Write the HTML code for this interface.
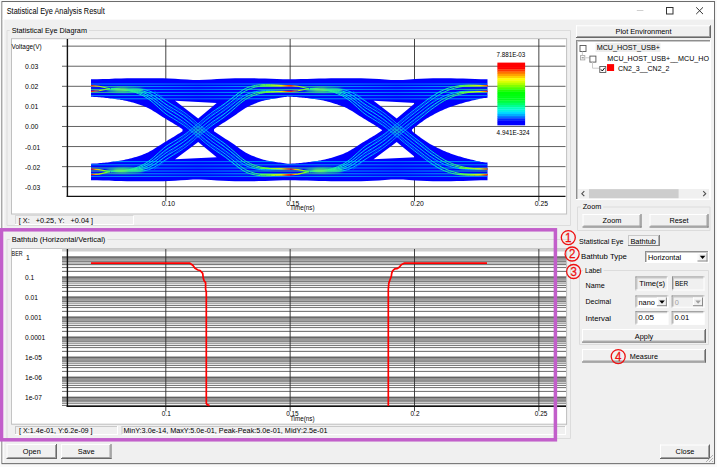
<!DOCTYPE html>
<html><head><meta charset="utf-8"><title>Statistical Eye Analysis Result</title>
<style>html,body{margin:0;padding:0;background:#fff;overflow:hidden}svg{display:block}</style></head>
<body>
<svg width="717" height="467" viewBox="0 0 717 467" font-family='"Liberation Sans", sans-serif' font-size="8" shape-rendering="auto">
<rect x="0" y="0" width="717" height="467" fill="#ffffff"/>
<rect x="0" y="0" width="717" height="467" fill="#fafafa"/>
<rect x="1.95" y="1.55" width="712.6" height="462.1" fill="#f0f0f0" stroke="#666666" stroke-width="1"/>
<rect x="2.5" y="2.1" width="711.5" height="17.5" fill="#ffffff"/>
<rect x="2.5" y="19" width="1.8" height="444" fill="#fbfbfb"/>
<text x="6.7" y="13.8" font-size="8.3" fill="#000" textLength="98" lengthAdjust="spacingAndGlyphs">Statistical Eye Analysis Result</text>
<line x1="636.8" y1="10.5" x2="643.4" y2="10.5" stroke="#cfcfcf" stroke-width="1"/>
<rect x="666.5" y="7.5" width="6.5" height="6.5" fill="none" stroke="#333" stroke-width="1"/>
<path d="M696.2 7.3L703 14.1M703 7.3L696.2 14.1" stroke="#333" stroke-width="1" fill="none"/>
<path d="M9.7 30.5H7.0V225.5H570.5V30.5H89.0" fill="none" stroke="#dcdcdc"/>
<text x="11.7" y="32.7" font-size="8" fill="#000" textLength="75.3" lengthAdjust="spacingAndGlyphs">Statistical Eye Diagram</text>
<rect x="11.5" y="38.7" width="555.1" height="175.3" fill="#fff" stroke="#c0c0c0" stroke-width="1"/>
<rect x="15" y="215.5" width="119" height="9" fill="#f0f0f0"/>
<line x1="15" y1="215.5" x2="134" y2="215.5" stroke="#d8d8d8" stroke-width="1"/>
<line x1="15.5" y1="215.5" x2="15.5" y2="224.5" stroke="#d8d8d8" stroke-width="1"/>
<line x1="15" y1="224.5" x2="134" y2="224.5" stroke="#ffffff" stroke-width="1"/>
<line x1="133.5" y1="215.5" x2="133.5" y2="224.5" stroke="#ffffff" stroke-width="1"/>
<text x="18.8" y="222.8" font-size="8" fill="#000" textLength="74.2" lengthAdjust="spacingAndGlyphs" xml:space="preserve">[ X:&#160;&#160; +0.25, Y:&#160;&#160; +0.04 ]</text>
<line x1="62" y1="46.15" x2="565.5" y2="46.15" stroke="#505050" stroke-width="0.9"/>
<text x="11.6" y="48.5" font-size="7" fill="#000" textLength="30" lengthAdjust="spacingAndGlyphs">Voltage(V)</text>
<line x1="62" y1="66.22999999999999" x2="565.5" y2="66.22999999999999" stroke="#505050" stroke-width="0.9"/>
<text x="25.1" y="68.6" font-size="7" fill="#000" textLength="13.3" lengthAdjust="spacingAndGlyphs">0.03</text>
<line x1="62" y1="86.31" x2="565.5" y2="86.31" stroke="#505050" stroke-width="0.9"/>
<text x="25.1" y="88.6" font-size="7" fill="#000" textLength="13.3" lengthAdjust="spacingAndGlyphs">0.02</text>
<line x1="62" y1="106.38999999999999" x2="565.5" y2="106.38999999999999" stroke="#505050" stroke-width="0.9"/>
<text x="25.1" y="108.6" font-size="7" fill="#000" textLength="13.3" lengthAdjust="spacingAndGlyphs">0.01</text>
<line x1="62" y1="126.47" x2="565.5" y2="126.47" stroke="#505050" stroke-width="0.9"/>
<text x="25.1" y="128.6" font-size="7" fill="#000" textLength="13.3" lengthAdjust="spacingAndGlyphs">0.00</text>
<line x1="62" y1="146.54999999999998" x2="565.5" y2="146.54999999999998" stroke="#505050" stroke-width="0.9"/>
<text x="25.1" y="149.6" font-size="7" fill="#000" textLength="15.1" lengthAdjust="spacingAndGlyphs">-0.01</text>
<line x1="62" y1="166.63" x2="565.5" y2="166.63" stroke="#505050" stroke-width="0.9"/>
<text x="25.1" y="169.6" font-size="7" fill="#000" textLength="15.1" lengthAdjust="spacingAndGlyphs">-0.02</text>
<line x1="62" y1="186.71" x2="565.5" y2="186.71" stroke="#505050" stroke-width="0.9"/>
<text x="25.1" y="189.6" font-size="7" fill="#000" textLength="15.1" lengthAdjust="spacingAndGlyphs">-0.03</text>
<line x1="165.8" y1="39" x2="165.8" y2="201.3" stroke="#303030" stroke-width="0.9"/>
<text x="161.8" y="206" font-size="7" fill="#000" textLength="13.2" lengthAdjust="spacingAndGlyphs">0.10</text>
<line x1="290.15" y1="39" x2="290.15" y2="201.3" stroke="#303030" stroke-width="0.9"/>
<text x="286.15" y="206" font-size="7" fill="#000" textLength="13.2" lengthAdjust="spacingAndGlyphs">0.15</text>
<line x1="414.5" y1="39" x2="414.5" y2="201.3" stroke="#303030" stroke-width="0.9"/>
<text x="410.5" y="206" font-size="7" fill="#000" textLength="13.2" lengthAdjust="spacingAndGlyphs">0.20</text>
<line x1="538.85" y1="39" x2="538.85" y2="201.3" stroke="#303030" stroke-width="0.9"/>
<text x="534.85" y="206" font-size="7" fill="#000" textLength="13.2" lengthAdjust="spacingAndGlyphs">0.25</text>
<text x="290" y="210" font-size="7" fill="#000" textLength="24.5" lengthAdjust="spacingAndGlyphs">Time(ns)</text>
<line x1="67.4" y1="39" x2="67.4" y2="197" stroke="#111" stroke-width="1.4"/>
<line x1="66.7" y1="196.4" x2="565.5" y2="196.4" stroke="#111" stroke-width="1.3"/>
<defs>
<clipPath id="eyeclip"><path clip-rule="evenodd" d="M91.0 79.3 97.0 79.2 103.0 79.1 109.0 78.9 115.0 78.6 121.0 78.5 127.0 78.3 133.0 78.3 139.0 78.2 145.0 78.2 151.0 78.2 157.0 78.3 163.0 78.3 169.0 78.5 175.0 78.8 181.0 79.2 187.0 79.6 193.0 79.9 199.0 80.0 205.0 79.8 211.0 79.5 217.0 79.1 223.0 78.7 229.0 78.5 235.0 78.3 241.0 78.3 247.0 78.3 253.0 78.3 259.0 78.4 265.0 78.6 271.0 78.8 277.0 79.0 283.0 79.2 289.0 79.3 295.0 79.3 301.0 79.1 307.0 78.9 313.0 78.7 319.0 78.5 325.0 78.4 331.0 78.3 337.0 78.2 343.0 78.2 349.0 78.2 355.0 78.3 361.0 78.3 367.0 78.5 373.0 78.8 379.0 79.1 385.0 79.6 391.0 79.9 397.0 80.0 403.0 79.9 409.0 79.5 415.0 79.1 421.0 78.7 427.0 78.5 433.0 78.3 439.0 78.3 445.0 78.3 451.0 78.3 457.0 78.4 463.0 78.6 469.0 78.8 475.0 79.0 481.0 79.2 487.0 79.3 487.5 79.3 487.5 180.2 487.0 180.2 481.0 180.3 475.0 180.5 469.0 180.7 463.0 180.9 457.0 181.1 451.0 181.2 445.0 181.2 439.0 181.2 433.0 181.2 427.0 181.0 421.0 180.8 415.0 180.4 409.0 180.0 403.0 179.6 397.0 179.5 391.0 179.6 385.0 179.9 379.0 180.4 373.0 180.7 367.0 181.0 361.0 181.2 355.0 181.2 349.0 181.3 343.0 181.3 337.0 181.3 331.0 181.2 325.0 181.1 319.0 181.0 313.0 180.8 307.0 180.6 301.0 180.4 295.0 180.2 289.0 180.2 283.0 180.3 277.0 180.5 271.0 180.7 265.0 180.9 259.0 181.1 253.0 181.2 247.0 181.2 241.0 181.2 235.0 181.2 229.0 181.0 223.0 180.8 217.0 180.4 211.0 180.0 205.0 179.7 199.0 179.5 193.0 179.6 187.0 179.9 181.0 180.3 175.0 180.7 169.0 181.0 163.0 181.2 157.0 181.2 151.0 181.3 145.0 181.3 139.0 181.3 133.0 181.2 127.0 181.2 121.0 181.0 115.0 180.9 109.0 180.6 103.0 180.4 97.0 180.3 91.0 180.2ZM91.0 96.7 92.5 96.8 94.0 96.9 95.5 96.9 97.0 97.0 98.5 97.2 100.0 97.3 101.5 97.4 103.0 97.6 104.5 97.7 106.0 97.9 107.5 98.0 109.0 98.2 110.5 98.4 112.0 98.6 113.5 98.8 115.0 99.0 116.5 99.2 118.0 99.4 119.5 99.6 121.0 99.9 122.5 100.1 124.0 100.4 125.5 100.8 127.0 101.1 128.5 101.4 130.0 101.8 131.5 102.2 133.0 102.6 134.5 103.1 136.0 103.5 137.5 104.0 139.0 104.5 140.5 105.0 142.0 105.5 143.5 106.1 145.0 106.7 146.5 107.3 148.0 108.0 149.5 108.8 151.0 109.6 152.5 110.5 154.0 111.4 155.5 112.3 157.0 113.3 158.5 114.3 160.0 115.2 161.5 116.2 163.0 117.2 164.5 118.1 166.0 119.0 167.5 119.9 169.0 120.8 170.5 121.7 172.0 122.6 173.5 123.5 175.0 124.4 176.5 125.3 178.0 126.3 179.5 127.2 181.0 128.2 182.5 129.2 182.5 131.2 181.0 132.2 179.5 133.2 178.0 134.1 176.5 135.1 175.0 136.0 173.5 136.9 172.0 137.8 170.5 138.7 169.0 139.6 167.5 140.5 166.0 141.4 164.5 142.3 163.0 143.2 161.5 144.2 160.0 145.2 158.5 146.1 157.0 147.1 155.5 148.1 154.0 149.0 152.5 149.9 151.0 150.8 149.5 151.6 148.0 152.4 146.5 153.1 145.0 153.7 143.5 154.3 142.0 154.9 140.5 155.4 139.0 155.9 137.5 156.4 136.0 156.9 134.5 157.3 133.0 157.8 131.5 158.2 130.0 158.6 128.5 159.0 127.0 159.3 125.5 159.6 124.0 160.0 122.5 160.3 121.0 160.5 119.5 160.8 118.0 161.0 116.5 161.2 115.0 161.4 113.5 161.6 112.0 161.8 110.5 162.0 109.0 162.2 107.5 162.4 106.0 162.5 104.5 162.7 103.0 162.8 101.5 163.0 100.0 163.1 98.5 163.2 97.0 163.4 95.5 163.5 94.0 163.5 92.5 163.6 91.0 163.7ZM214.0 129.2 215.5 128.1 217.0 127.1 218.5 126.1 220.0 125.1 221.5 124.1 223.0 123.1 224.5 122.2 226.0 121.2 227.5 120.3 229.0 119.3 230.5 118.3 232.0 117.3 233.5 116.3 235.0 115.3 236.5 114.2 238.0 113.1 239.5 112.0 241.0 111.0 242.5 109.9 244.0 108.9 245.5 108.0 247.0 107.2 248.5 106.4 250.0 105.7 251.5 105.0 253.0 104.4 254.5 103.8 256.0 103.2 257.5 102.6 259.0 102.1 260.5 101.6 262.0 101.1 263.5 100.7 265.0 100.3 266.5 100.0 268.0 99.7 269.5 99.4 271.0 99.1 272.5 98.9 274.0 98.7 275.5 98.4 277.0 98.2 278.5 98.0 280.0 97.8 281.5 97.6 283.0 97.3 284.5 97.1 286.0 96.9 287.5 96.6 289.0 96.7 290.5 96.7 292.0 96.8 293.5 96.9 295.0 97.0 296.5 97.1 298.0 97.2 299.5 97.4 301.0 97.5 302.5 97.7 304.0 97.8 305.5 98.0 307.0 98.1 308.5 98.3 310.0 98.5 311.5 98.7 313.0 98.9 314.5 99.1 316.0 99.3 317.5 99.5 319.0 99.8 320.5 100.0 322.0 100.3 323.5 100.6 325.0 101.0 326.5 101.3 328.0 101.7 329.5 102.1 331.0 102.5 332.5 102.9 334.0 103.4 335.5 103.9 337.0 104.3 338.5 104.9 340.0 105.4 341.5 105.9 343.0 106.5 344.5 107.1 346.0 107.8 347.5 108.5 349.0 109.4 350.5 110.2 352.0 111.1 353.5 112.0 355.0 113.0 356.5 113.9 358.0 114.9 359.5 115.9 361.0 116.8 362.5 117.8 364.0 118.7 365.5 119.6 367.0 120.5 368.5 121.4 370.0 122.3 371.5 123.2 373.0 124.1 374.5 125.0 376.0 125.9 377.5 126.9 379.0 127.9 380.5 128.9 382.0 129.9 382.0 130.5 380.5 131.5 379.0 132.5 377.5 133.5 376.0 134.5 374.5 135.4 373.0 136.3 371.5 137.2 370.0 138.1 368.5 139.0 367.0 139.9 365.5 140.8 364.0 141.7 362.5 142.6 361.0 143.6 359.5 144.5 358.0 145.5 356.5 146.5 355.0 147.4 353.5 148.4 352.0 149.3 350.5 150.2 349.0 151.0 347.5 151.9 346.0 152.6 344.5 153.3 343.0 153.9 341.5 154.5 340.0 155.0 338.5 155.5 337.0 156.1 335.5 156.5 334.0 157.0 332.5 157.5 331.0 157.9 329.5 158.3 328.0 158.7 326.5 159.1 325.0 159.4 323.5 159.8 322.0 160.1 320.5 160.4 319.0 160.6 317.5 160.9 316.0 161.1 314.5 161.3 313.0 161.5 311.5 161.7 310.0 161.9 308.5 162.1 307.0 162.3 305.5 162.4 304.0 162.6 302.5 162.7 301.0 162.9 299.5 163.0 298.0 163.2 296.5 163.3 295.0 163.4 293.5 163.5 292.0 163.6 290.5 163.7 289.0 163.7 287.5 163.8 286.0 163.5 284.5 163.3 283.0 163.1 281.5 162.8 280.0 162.6 278.5 162.4 277.0 162.2 275.5 162.0 274.0 161.7 272.5 161.5 271.0 161.3 269.5 161.0 268.0 160.7 266.5 160.4 265.0 160.1 263.5 159.7 262.0 159.3 260.5 158.8 259.0 158.3 257.5 157.8 256.0 157.2 254.5 156.6 253.0 156.0 251.5 155.4 250.0 154.7 248.5 154.0 247.0 153.2 245.5 152.4 244.0 151.5 242.5 150.5 241.0 149.4 239.5 148.4 238.0 147.3 236.5 146.2 235.0 145.1 233.5 144.1 232.0 143.1 230.5 142.1 229.0 141.1 227.5 140.1 226.0 139.2 224.5 138.2 223.0 137.3 221.5 136.3 220.0 135.3 218.5 134.3 217.0 133.3 215.5 132.3 214.0 131.2ZM412.0 129.4 413.5 128.2 415.0 127.0 416.5 125.9 418.0 124.7 419.5 123.6 421.0 122.5 422.5 121.4 424.0 120.3 425.5 119.3 427.0 118.3 428.5 117.4 430.0 116.5 431.5 115.7 433.0 114.9 434.5 114.1 436.0 113.3 437.5 112.5 439.0 111.8 440.5 111.1 442.0 110.4 443.5 109.7 445.0 109.1 446.5 108.4 448.0 107.8 449.5 107.3 451.0 106.7 452.5 106.2 454.0 105.7 455.5 105.2 457.0 104.7 458.5 104.2 460.0 103.8 461.5 103.4 463.0 102.9 464.5 102.5 466.0 102.1 467.5 101.7 469.0 101.4 470.5 101.0 472.0 100.6 473.5 100.3 475.0 99.9 476.5 99.5 478.0 99.2 479.5 98.8 481.0 98.5 482.5 98.3 484.0 98.1 485.5 97.9 487.5 97.8 487.5 162.6 485.5 162.5 484.0 162.3 482.5 162.1 481.0 161.9 479.5 161.6 478.0 161.2 476.5 160.9 475.0 160.5 473.5 160.1 472.0 159.8 470.5 159.4 469.0 159.0 467.5 158.7 466.0 158.3 464.5 157.9 463.0 157.5 461.5 157.0 460.0 156.6 458.5 156.2 457.0 155.7 455.5 155.2 454.0 154.7 452.5 154.2 451.0 153.7 449.5 153.1 448.0 152.6 446.5 152.0 445.0 151.3 443.5 150.7 442.0 150.0 440.5 149.3 439.0 148.6 437.5 147.9 436.0 147.1 434.5 146.3 433.0 145.5 431.5 144.7 430.0 143.9 428.5 143.0 427.0 142.1 425.5 141.1 424.0 140.1 422.5 139.0 421.0 137.9 419.5 136.8 418.0 135.7 416.5 134.5 415.0 133.4 413.5 132.2 412.0 131.0ZM175.1 100.8L216.7 103.0L198.2 118.6ZM175.1 159.3L216.7 157.3L198.2 142.0ZM373.6 100.8L415.2 103.0L396.7 118.6ZM373.6 159.3L415.2 157.3L396.7 142.0Z"/></clipPath>
<linearGradient id="heat" gradientUnits="userSpaceOnUse" x1="0" y1="0" x2="600" y2="0">
<stop offset="0.0267" stop-color="#00c0ff" stop-opacity="1"/>
<stop offset="0.0600" stop-color="#00e8e0" stop-opacity="1"/>
<stop offset="0.0883" stop-color="#20f890" stop-opacity="1"/>
<stop offset="0.1150" stop-color="#70ff30" stop-opacity="1"/>
<stop offset="0.1367" stop-color="#e8f000" stop-opacity="1"/>
<stop offset="0.1483" stop-color="#ff4000" stop-opacity="1"/>
<stop offset="0.1533" stop-color="#ff2000" stop-opacity="1"/>
<stop offset="0.1600" stop-color="#ffb000" stop-opacity="1"/>
<stop offset="0.1683" stop-color="#b0ff00" stop-opacity="1"/>
<stop offset="0.1850" stop-color="#40ff50" stop-opacity="1"/>
<stop offset="0.2150" stop-color="#20f8a0" stop-opacity="1"/>
<stop offset="0.2483" stop-color="#00e8e8" stop-opacity="1"/>
<stop offset="0.2850" stop-color="#00c0ff" stop-opacity="1"/>
<stop offset="0.3283" stop-color="#00a0ff" stop-opacity="1"/>
<stop offset="0.3300" stop-color="#00a0ff" stop-opacity="1"/>
<stop offset="0.3583" stop-color="#00c0ff" stop-opacity="1"/>
<stop offset="0.3917" stop-color="#00e8e0" stop-opacity="1"/>
<stop offset="0.4200" stop-color="#20f890" stop-opacity="1"/>
<stop offset="0.4467" stop-color="#70ff30" stop-opacity="1"/>
<stop offset="0.4683" stop-color="#e8f000" stop-opacity="1"/>
<stop offset="0.4800" stop-color="#ff4000" stop-opacity="1"/>
<stop offset="0.4850" stop-color="#ff2000" stop-opacity="1"/>
<stop offset="0.4917" stop-color="#ffb000" stop-opacity="1"/>
<stop offset="0.5000" stop-color="#b0ff00" stop-opacity="1"/>
<stop offset="0.5167" stop-color="#40ff50" stop-opacity="1"/>
<stop offset="0.5467" stop-color="#20f8a0" stop-opacity="1"/>
<stop offset="0.5800" stop-color="#00e8e8" stop-opacity="1"/>
<stop offset="0.6167" stop-color="#00c0ff" stop-opacity="1"/>
<stop offset="0.6600" stop-color="#00a0ff" stop-opacity="1"/>
<stop offset="0.6617" stop-color="#00a0ff" stop-opacity="1"/>
<stop offset="0.6900" stop-color="#00c0ff" stop-opacity="1"/>
<stop offset="0.7233" stop-color="#00e8e0" stop-opacity="1"/>
<stop offset="0.7517" stop-color="#20f890" stop-opacity="1"/>
<stop offset="0.7783" stop-color="#70ff30" stop-opacity="1"/>
<stop offset="0.8000" stop-color="#e8f000" stop-opacity="1"/>
<stop offset="0.8117" stop-color="#ff4000" stop-opacity="1"/>
<stop offset="0.8167" stop-color="#ff2000" stop-opacity="1"/>
<stop offset="0.8233" stop-color="#ffb000" stop-opacity="1"/>
<stop offset="0.8317" stop-color="#b0ff00" stop-opacity="1"/>
<stop offset="0.8483" stop-color="#40ff50" stop-opacity="1"/>
<stop offset="0.8783" stop-color="#20f8a0" stop-opacity="1"/>
<stop offset="0.9117" stop-color="#00e8e8" stop-opacity="1"/>
<stop offset="0.9483" stop-color="#00c0ff" stop-opacity="1"/>
<stop offset="0.9917" stop-color="#00a0ff" stop-opacity="1"/>
</linearGradient>
<linearGradient id="cool" gradientUnits="userSpaceOnUse" x1="0" y1="0" x2="600" y2="0">
<stop offset="0.0517" stop-color="#00a8ff" stop-opacity="1"/>
<stop offset="0.1017" stop-color="#00c8ff" stop-opacity="1"/>
<stop offset="0.1517" stop-color="#00b0ff" stop-opacity="1"/>
<stop offset="0.2017" stop-color="#00d0ff" stop-opacity="1"/>
<stop offset="0.2517" stop-color="#00c0ff" stop-opacity="1"/>
<stop offset="0.3283" stop-color="#0090ff" stop-opacity="1"/>
<stop offset="0.3300" stop-color="#0090ff" stop-opacity="1"/>
<stop offset="0.3833" stop-color="#00a8ff" stop-opacity="1"/>
<stop offset="0.4333" stop-color="#00c8ff" stop-opacity="1"/>
<stop offset="0.4833" stop-color="#00b0ff" stop-opacity="1"/>
<stop offset="0.5333" stop-color="#00d0ff" stop-opacity="1"/>
<stop offset="0.5833" stop-color="#00c0ff" stop-opacity="1"/>
<stop offset="0.6600" stop-color="#0090ff" stop-opacity="1"/>
<stop offset="0.6617" stop-color="#0090ff" stop-opacity="1"/>
<stop offset="0.7150" stop-color="#00a8ff" stop-opacity="1"/>
<stop offset="0.7650" stop-color="#00c8ff" stop-opacity="1"/>
<stop offset="0.8150" stop-color="#00b0ff" stop-opacity="1"/>
<stop offset="0.8650" stop-color="#00d0ff" stop-opacity="1"/>
<stop offset="0.9150" stop-color="#00c0ff" stop-opacity="1"/>
<stop offset="0.9917" stop-color="#0090ff" stop-opacity="1"/>
</linearGradient>
<linearGradient id="warm" gradientUnits="userSpaceOnUse" x1="0" y1="0" x2="600" y2="0">
<stop offset="0.0600" stop-color="#00c8ff" stop-opacity="1"/>
<stop offset="0.1050" stop-color="#10e8b0" stop-opacity="1"/>
<stop offset="0.1517" stop-color="#50f870" stop-opacity="1"/>
<stop offset="0.2150" stop-color="#10e8b0" stop-opacity="1"/>
<stop offset="0.2550" stop-color="#00c8ff" stop-opacity="1"/>
<stop offset="0.3283" stop-color="#0098ff" stop-opacity="1"/>
<stop offset="0.3300" stop-color="#0098ff" stop-opacity="1"/>
<stop offset="0.3917" stop-color="#00c8ff" stop-opacity="1"/>
<stop offset="0.4367" stop-color="#10e8b0" stop-opacity="1"/>
<stop offset="0.4833" stop-color="#50f870" stop-opacity="1"/>
<stop offset="0.5467" stop-color="#10e8b0" stop-opacity="1"/>
<stop offset="0.5867" stop-color="#00c8ff" stop-opacity="1"/>
<stop offset="0.6600" stop-color="#0098ff" stop-opacity="1"/>
<stop offset="0.6617" stop-color="#0098ff" stop-opacity="1"/>
<stop offset="0.7233" stop-color="#00c8ff" stop-opacity="1"/>
<stop offset="0.7683" stop-color="#10e8b0" stop-opacity="1"/>
<stop offset="0.8150" stop-color="#50f870" stop-opacity="1"/>
<stop offset="0.8783" stop-color="#10e8b0" stop-opacity="1"/>
<stop offset="0.9183" stop-color="#00c8ff" stop-opacity="1"/>
<stop offset="0.9917" stop-color="#0098ff" stop-opacity="1"/>
</linearGradient>
<filter id="fz" x="-20%" y="-50%" width="140%" height="200%"><feGaussianBlur stdDeviation="1.6 0.9"/></filter>
</defs>
<path fill="#0000ff" fill-rule="evenodd" d="M91.0 79.3 97.0 79.2 103.0 79.1 109.0 78.9 115.0 78.6 121.0 78.5 127.0 78.3 133.0 78.3 139.0 78.2 145.0 78.2 151.0 78.2 157.0 78.3 163.0 78.3 169.0 78.5 175.0 78.8 181.0 79.2 187.0 79.6 193.0 79.9 199.0 80.0 205.0 79.8 211.0 79.5 217.0 79.1 223.0 78.7 229.0 78.5 235.0 78.3 241.0 78.3 247.0 78.3 253.0 78.3 259.0 78.4 265.0 78.6 271.0 78.8 277.0 79.0 283.0 79.2 289.0 79.3 295.0 79.3 301.0 79.1 307.0 78.9 313.0 78.7 319.0 78.5 325.0 78.4 331.0 78.3 337.0 78.2 343.0 78.2 349.0 78.2 355.0 78.3 361.0 78.3 367.0 78.5 373.0 78.8 379.0 79.1 385.0 79.6 391.0 79.9 397.0 80.0 403.0 79.9 409.0 79.5 415.0 79.1 421.0 78.7 427.0 78.5 433.0 78.3 439.0 78.3 445.0 78.3 451.0 78.3 457.0 78.4 463.0 78.6 469.0 78.8 475.0 79.0 481.0 79.2 487.0 79.3 487.5 79.3 487.5 180.2 487.0 180.2 481.0 180.3 475.0 180.5 469.0 180.7 463.0 180.9 457.0 181.1 451.0 181.2 445.0 181.2 439.0 181.2 433.0 181.2 427.0 181.0 421.0 180.8 415.0 180.4 409.0 180.0 403.0 179.6 397.0 179.5 391.0 179.6 385.0 179.9 379.0 180.4 373.0 180.7 367.0 181.0 361.0 181.2 355.0 181.2 349.0 181.3 343.0 181.3 337.0 181.3 331.0 181.2 325.0 181.1 319.0 181.0 313.0 180.8 307.0 180.6 301.0 180.4 295.0 180.2 289.0 180.2 283.0 180.3 277.0 180.5 271.0 180.7 265.0 180.9 259.0 181.1 253.0 181.2 247.0 181.2 241.0 181.2 235.0 181.2 229.0 181.0 223.0 180.8 217.0 180.4 211.0 180.0 205.0 179.7 199.0 179.5 193.0 179.6 187.0 179.9 181.0 180.3 175.0 180.7 169.0 181.0 163.0 181.2 157.0 181.2 151.0 181.3 145.0 181.3 139.0 181.3 133.0 181.2 127.0 181.2 121.0 181.0 115.0 180.9 109.0 180.6 103.0 180.4 97.0 180.3 91.0 180.2ZM91.0 96.7 92.5 96.8 94.0 96.9 95.5 96.9 97.0 97.0 98.5 97.2 100.0 97.3 101.5 97.4 103.0 97.6 104.5 97.7 106.0 97.9 107.5 98.0 109.0 98.2 110.5 98.4 112.0 98.6 113.5 98.8 115.0 99.0 116.5 99.2 118.0 99.4 119.5 99.6 121.0 99.9 122.5 100.1 124.0 100.4 125.5 100.8 127.0 101.1 128.5 101.4 130.0 101.8 131.5 102.2 133.0 102.6 134.5 103.1 136.0 103.5 137.5 104.0 139.0 104.5 140.5 105.0 142.0 105.5 143.5 106.1 145.0 106.7 146.5 107.3 148.0 108.0 149.5 108.8 151.0 109.6 152.5 110.5 154.0 111.4 155.5 112.3 157.0 113.3 158.5 114.3 160.0 115.2 161.5 116.2 163.0 117.2 164.5 118.1 166.0 119.0 167.5 119.9 169.0 120.8 170.5 121.7 172.0 122.6 173.5 123.5 175.0 124.4 176.5 125.3 178.0 126.3 179.5 127.2 181.0 128.2 182.5 129.2 182.5 131.2 181.0 132.2 179.5 133.2 178.0 134.1 176.5 135.1 175.0 136.0 173.5 136.9 172.0 137.8 170.5 138.7 169.0 139.6 167.5 140.5 166.0 141.4 164.5 142.3 163.0 143.2 161.5 144.2 160.0 145.2 158.5 146.1 157.0 147.1 155.5 148.1 154.0 149.0 152.5 149.9 151.0 150.8 149.5 151.6 148.0 152.4 146.5 153.1 145.0 153.7 143.5 154.3 142.0 154.9 140.5 155.4 139.0 155.9 137.5 156.4 136.0 156.9 134.5 157.3 133.0 157.8 131.5 158.2 130.0 158.6 128.5 159.0 127.0 159.3 125.5 159.6 124.0 160.0 122.5 160.3 121.0 160.5 119.5 160.8 118.0 161.0 116.5 161.2 115.0 161.4 113.5 161.6 112.0 161.8 110.5 162.0 109.0 162.2 107.5 162.4 106.0 162.5 104.5 162.7 103.0 162.8 101.5 163.0 100.0 163.1 98.5 163.2 97.0 163.4 95.5 163.5 94.0 163.5 92.5 163.6 91.0 163.7ZM214.0 129.2 215.5 128.1 217.0 127.1 218.5 126.1 220.0 125.1 221.5 124.1 223.0 123.1 224.5 122.2 226.0 121.2 227.5 120.3 229.0 119.3 230.5 118.3 232.0 117.3 233.5 116.3 235.0 115.3 236.5 114.2 238.0 113.1 239.5 112.0 241.0 111.0 242.5 109.9 244.0 108.9 245.5 108.0 247.0 107.2 248.5 106.4 250.0 105.7 251.5 105.0 253.0 104.4 254.5 103.8 256.0 103.2 257.5 102.6 259.0 102.1 260.5 101.6 262.0 101.1 263.5 100.7 265.0 100.3 266.5 100.0 268.0 99.7 269.5 99.4 271.0 99.1 272.5 98.9 274.0 98.7 275.5 98.4 277.0 98.2 278.5 98.0 280.0 97.8 281.5 97.6 283.0 97.3 284.5 97.1 286.0 96.9 287.5 96.6 289.0 96.7 290.5 96.7 292.0 96.8 293.5 96.9 295.0 97.0 296.5 97.1 298.0 97.2 299.5 97.4 301.0 97.5 302.5 97.7 304.0 97.8 305.5 98.0 307.0 98.1 308.5 98.3 310.0 98.5 311.5 98.7 313.0 98.9 314.5 99.1 316.0 99.3 317.5 99.5 319.0 99.8 320.5 100.0 322.0 100.3 323.5 100.6 325.0 101.0 326.5 101.3 328.0 101.7 329.5 102.1 331.0 102.5 332.5 102.9 334.0 103.4 335.5 103.9 337.0 104.3 338.5 104.9 340.0 105.4 341.5 105.9 343.0 106.5 344.5 107.1 346.0 107.8 347.5 108.5 349.0 109.4 350.5 110.2 352.0 111.1 353.5 112.0 355.0 113.0 356.5 113.9 358.0 114.9 359.5 115.9 361.0 116.8 362.5 117.8 364.0 118.7 365.5 119.6 367.0 120.5 368.5 121.4 370.0 122.3 371.5 123.2 373.0 124.1 374.5 125.0 376.0 125.9 377.5 126.9 379.0 127.9 380.5 128.9 382.0 129.9 382.0 130.5 380.5 131.5 379.0 132.5 377.5 133.5 376.0 134.5 374.5 135.4 373.0 136.3 371.5 137.2 370.0 138.1 368.5 139.0 367.0 139.9 365.5 140.8 364.0 141.7 362.5 142.6 361.0 143.6 359.5 144.5 358.0 145.5 356.5 146.5 355.0 147.4 353.5 148.4 352.0 149.3 350.5 150.2 349.0 151.0 347.5 151.9 346.0 152.6 344.5 153.3 343.0 153.9 341.5 154.5 340.0 155.0 338.5 155.5 337.0 156.1 335.5 156.5 334.0 157.0 332.5 157.5 331.0 157.9 329.5 158.3 328.0 158.7 326.5 159.1 325.0 159.4 323.5 159.8 322.0 160.1 320.5 160.4 319.0 160.6 317.5 160.9 316.0 161.1 314.5 161.3 313.0 161.5 311.5 161.7 310.0 161.9 308.5 162.1 307.0 162.3 305.5 162.4 304.0 162.6 302.5 162.7 301.0 162.9 299.5 163.0 298.0 163.2 296.5 163.3 295.0 163.4 293.5 163.5 292.0 163.6 290.5 163.7 289.0 163.7 287.5 163.8 286.0 163.5 284.5 163.3 283.0 163.1 281.5 162.8 280.0 162.6 278.5 162.4 277.0 162.2 275.5 162.0 274.0 161.7 272.5 161.5 271.0 161.3 269.5 161.0 268.0 160.7 266.5 160.4 265.0 160.1 263.5 159.7 262.0 159.3 260.5 158.8 259.0 158.3 257.5 157.8 256.0 157.2 254.5 156.6 253.0 156.0 251.5 155.4 250.0 154.7 248.5 154.0 247.0 153.2 245.5 152.4 244.0 151.5 242.5 150.5 241.0 149.4 239.5 148.4 238.0 147.3 236.5 146.2 235.0 145.1 233.5 144.1 232.0 143.1 230.5 142.1 229.0 141.1 227.5 140.1 226.0 139.2 224.5 138.2 223.0 137.3 221.5 136.3 220.0 135.3 218.5 134.3 217.0 133.3 215.5 132.3 214.0 131.2ZM412.0 129.4 413.5 128.2 415.0 127.0 416.5 125.9 418.0 124.7 419.5 123.6 421.0 122.5 422.5 121.4 424.0 120.3 425.5 119.3 427.0 118.3 428.5 117.4 430.0 116.5 431.5 115.7 433.0 114.9 434.5 114.1 436.0 113.3 437.5 112.5 439.0 111.8 440.5 111.1 442.0 110.4 443.5 109.7 445.0 109.1 446.5 108.4 448.0 107.8 449.5 107.3 451.0 106.7 452.5 106.2 454.0 105.7 455.5 105.2 457.0 104.7 458.5 104.2 460.0 103.8 461.5 103.4 463.0 102.9 464.5 102.5 466.0 102.1 467.5 101.7 469.0 101.4 470.5 101.0 472.0 100.6 473.5 100.3 475.0 99.9 476.5 99.5 478.0 99.2 479.5 98.8 481.0 98.5 482.5 98.3 484.0 98.1 485.5 97.9 487.5 97.8 487.5 162.6 485.5 162.5 484.0 162.3 482.5 162.1 481.0 161.9 479.5 161.6 478.0 161.2 476.5 160.9 475.0 160.5 473.5 160.1 472.0 159.8 470.5 159.4 469.0 159.0 467.5 158.7 466.0 158.3 464.5 157.9 463.0 157.5 461.5 157.0 460.0 156.6 458.5 156.2 457.0 155.7 455.5 155.2 454.0 154.7 452.5 154.2 451.0 153.7 449.5 153.1 448.0 152.6 446.5 152.0 445.0 151.3 443.5 150.7 442.0 150.0 440.5 149.3 439.0 148.6 437.5 147.9 436.0 147.1 434.5 146.3 433.0 145.5 431.5 144.7 430.0 143.9 428.5 143.0 427.0 142.1 425.5 141.1 424.0 140.1 422.5 139.0 421.0 137.9 419.5 136.8 418.0 135.7 416.5 134.5 415.0 133.4 413.5 132.2 412.0 131.0ZM175.1 100.8L216.7 103.0L198.2 118.6ZM175.1 159.3L216.7 157.3L198.2 142.0ZM373.6 100.8L415.2 103.0L396.7 118.6ZM373.6 159.3L415.2 157.3L396.7 142.0Z"/>
<g clip-path="url(#eyeclip)" fill="none">
<path d="M91.0 84.0 487.5 84.0" stroke="url(#cool)" stroke-width="0.9" opacity="0.85"/>
<path d="M91.0 176.4 487.5 176.4" stroke="url(#cool)" stroke-width="0.9" opacity="0.85"/>
<path d="M91.0 86.6 487.5 86.6" stroke="url(#warm)" stroke-width="0.9" opacity="0.85"/>
<path d="M91.0 173.8 487.5 173.8" stroke="url(#warm)" stroke-width="0.9" opacity="0.85"/>
<path d="M91.0 89.4 487.5 89.4" stroke="url(#warm)" stroke-width="0.9" opacity="0.85"/>
<path d="M91.0 171.0 487.5 171.0" stroke="url(#warm)" stroke-width="0.9" opacity="0.85"/>
<path d="M91.0 92.4 487.5 92.4" stroke="url(#warm)" stroke-width="0.9" opacity="0.85"/>
<path d="M91.0 168.0 487.5 168.0" stroke="url(#warm)" stroke-width="0.9" opacity="0.85"/>
<path d="M91.0 95.6 487.5 95.6" stroke="url(#cool)" stroke-width="0.9" opacity="0.85"/>
<path d="M91.0 164.8 487.5 164.8" stroke="url(#cool)" stroke-width="0.9" opacity="0.85"/>
<path d="M91.0 98.8 487.5 98.8" stroke="url(#cool)" stroke-width="0.9" opacity="0.85"/>
<path d="M91.0 161.6 487.5 161.6" stroke="url(#cool)" stroke-width="0.9" opacity="0.85"/>
<path d="M154.2 90.8 242.2 160.4" stroke="#0088ff" stroke-width="0.7" opacity="0.7"/>
<path d="M154.2 169.6 242.2 100.0" stroke="#0088ff" stroke-width="0.7" opacity="0.7"/>
<path d="M154.2 95.6 242.2 165.2" stroke="#0088ff" stroke-width="0.7" opacity="0.7"/>
<path d="M154.2 164.8 242.2 95.2" stroke="#0088ff" stroke-width="0.7" opacity="0.7"/>
<path d="M154.2 100.3 242.2 169.9" stroke="#0088ff" stroke-width="0.7" opacity="0.7"/>
<path d="M154.2 160.1 242.2 90.5" stroke="#0088ff" stroke-width="0.7" opacity="0.7"/>
<path d="M352.7 90.8 440.7 160.4" stroke="#0088ff" stroke-width="0.7" opacity="0.7"/>
<path d="M352.7 169.6 440.7 100.0" stroke="#0088ff" stroke-width="0.7" opacity="0.7"/>
<path d="M352.7 95.6 440.7 165.2" stroke="#0088ff" stroke-width="0.7" opacity="0.7"/>
<path d="M352.7 164.8 440.7 95.2" stroke="#0088ff" stroke-width="0.7" opacity="0.7"/>
<path d="M352.7 100.3 440.7 169.9" stroke="#0088ff" stroke-width="0.7" opacity="0.7"/>
<path d="M352.7 160.1 440.7 90.5" stroke="#0088ff" stroke-width="0.7" opacity="0.7"/>
<ellipse cx="-74" cy="90.0" rx="19" ry="2.8" fill="#38f080" opacity="0.75" filter="url(#fz)"/>
<ellipse cx="-78" cy="89.7" rx="7" ry="1.6" fill="#90ff40" opacity="0.55" filter="url(#fz)"/>
<ellipse cx="-74" cy="170.4" rx="19" ry="2.8" fill="#38f080" opacity="0.75" filter="url(#fz)"/>
<ellipse cx="-78" cy="170.7" rx="7" ry="1.6" fill="#90ff40" opacity="0.55" filter="url(#fz)"/>
<path d="M111.0 88.8 113.5 89.0 116.0 89.1 118.5 89.3 121.0 89.5 123.5 89.8 126.0 90.2 128.5 90.6 131.0 91.2 133.5 91.9 136.0 92.7 138.5 93.7 141.0 94.8 143.5 96.0 146.0 97.4 148.5 99.1 151.0 100.9 153.5 103.0 156.0 105.2 158.5 107.5 161.0 109.8 163.5 112.0 166.0 114.0 168.5 115.7 171.0 117.2 173.5 118.7 176.0 120.2 178.5 121.8 181.0 123.4 183.5 125.1 186.0 126.9 188.5 128.9 191.0 130.9 193.5 133.0 196.0 135.3 198.0 137.1" stroke="url(#heat)" stroke-width="0.95" opacity="1"/>
<path d="M111.0 171.6 113.5 171.4 116.0 171.2 118.5 171.1 121.0 170.9 123.5 170.6 126.0 170.2 128.5 169.8 131.0 169.2 133.5 168.5 136.0 167.7 138.5 166.7 141.0 165.6 143.5 164.4 146.0 163.0 148.5 161.3 151.0 159.5 153.5 157.4 156.0 155.2 158.5 152.9 161.0 150.6 163.5 148.4 166.0 146.4 168.5 144.7 171.0 143.2 173.5 141.7 176.0 140.2 178.5 138.6 181.0 137.0 183.5 135.3 186.0 133.5 188.5 131.5 191.0 129.5 193.5 127.4 196.0 125.1 198.0 123.3" stroke="url(#heat)" stroke-width="0.95" opacity="1"/>
<path d="M111.0 88.8 113.5 89.0 116.0 89.1 118.5 89.3 121.0 89.5 123.5 89.7 126.0 90.0 128.5 90.3 131.0 90.7 133.5 91.2 136.0 91.9 138.5 92.6 141.0 93.4 143.5 94.4 146.0 95.6 148.5 97.0 151.0 98.6 153.5 100.5 156.0 102.5 158.5 104.6 161.0 106.7 163.5 108.8 166.0 110.7 168.5 112.4 171.0 113.9 173.5 115.4 176.0 116.9 178.5 118.5 181.0 120.1 183.5 121.8 186.0 123.6 188.5 125.6 191.0 127.6 193.5 129.7 196.0 132.0 198.0 133.8" stroke="url(#heat)" stroke-width="0.95" opacity="1"/>
<path d="M111.0 171.6 113.5 171.4 116.0 171.2 118.5 171.1 121.0 170.9 123.5 170.7 126.0 170.4 128.5 170.1 131.0 169.7 133.5 169.2 136.0 168.5 138.5 167.8 141.0 167.0 143.5 166.0 146.0 164.8 148.5 163.4 151.0 161.8 153.5 159.9 156.0 157.9 158.5 155.8 161.0 153.7 163.5 151.6 166.0 149.7 168.5 148.0 171.0 146.5 173.5 145.0 176.0 143.5 178.5 141.9 181.0 140.3 183.5 138.6 186.0 136.8 188.5 134.8 191.0 132.8 193.5 130.7 196.0 128.4 198.0 126.6" stroke="url(#heat)" stroke-width="0.95" opacity="1"/>
<path d="M111.0 88.8 113.5 89.0 116.0 89.1 118.5 89.3 121.0 89.5 123.5 89.7 126.0 89.8 128.5 90.0 131.0 90.3 133.5 90.6 136.0 91.0 138.5 91.5 141.0 92.1 143.5 92.8 146.0 93.7 148.5 94.9 151.0 96.3 153.5 97.9 156.0 99.7 158.5 101.7 161.0 103.7 163.5 105.6 166.0 107.5 168.5 109.1 171.0 110.6 173.5 112.1 176.0 113.6 178.5 115.2 181.0 116.8 183.5 118.5 186.0 120.3 188.5 122.3 191.0 124.3 193.5 126.4 196.0 128.7 198.0 130.5" stroke="url(#heat)" stroke-width="0.95" opacity="1"/>
<path d="M111.0 171.6 113.5 171.4 116.0 171.2 118.5 171.1 121.0 170.9 123.5 170.7 126.0 170.6 128.5 170.4 131.0 170.1 133.5 169.8 136.0 169.4 138.5 168.9 141.0 168.3 143.5 167.6 146.0 166.7 148.5 165.5 151.0 164.1 153.5 162.5 156.0 160.7 158.5 158.7 161.0 156.7 163.5 154.8 166.0 152.9 168.5 151.3 171.0 149.8 173.5 148.3 176.0 146.8 178.5 145.2 181.0 143.6 183.5 141.9 186.0 140.1 188.5 138.1 191.0 136.1 193.5 134.0 196.0 131.7 198.0 129.9" stroke="url(#heat)" stroke-width="0.95" opacity="1"/>
<path d="M111.0 88.8 113.5 89.0 116.0 89.1 118.5 89.3 121.0 89.5 123.5 89.6 126.0 89.7 128.5 89.7 131.0 89.8 133.5 89.9 136.0 90.1 138.5 90.3 141.0 90.7 143.5 91.2 146.0 91.9 148.5 92.8 151.0 94.0 153.5 95.4 156.0 97.0 158.5 98.7 161.0 100.6 163.5 102.4 166.0 104.2 168.5 105.8 171.0 107.3 173.5 108.8 176.0 110.3 178.5 111.9 181.0 113.5 183.5 115.2 186.0 117.0 188.5 119.0 191.0 121.0 193.5 123.1 196.0 125.4 198.0 127.2" stroke="url(#heat)" stroke-width="0.95" opacity="1"/>
<path d="M111.0 171.6 113.5 171.4 116.0 171.2 118.5 171.1 121.0 170.9 123.5 170.8 126.0 170.7 128.5 170.7 131.0 170.6 133.5 170.5 136.0 170.3 138.5 170.1 141.0 169.7 143.5 169.2 146.0 168.5 148.5 167.6 151.0 166.4 153.5 165.0 156.0 163.4 158.5 161.7 161.0 159.8 163.5 158.0 166.0 156.2 168.5 154.6 171.0 153.1 173.5 151.6 176.0 150.1 178.5 148.5 181.0 146.9 183.5 145.2 186.0 143.4 188.5 141.4 191.0 139.4 193.5 137.3 196.0 135.0 198.0 133.2" stroke="url(#heat)" stroke-width="0.95" opacity="1"/>
<path d="M111.0 88.8 113.5 89.0 116.0 89.1 118.5 89.3 121.0 89.5 123.5 89.5 126.0 89.5 128.5 89.4 131.0 89.3 133.5 89.2 136.0 89.2 138.5 89.2 141.0 89.4 143.5 89.6 146.0 90.0 148.5 90.7 151.0 91.6 153.5 92.8 156.0 94.2 158.5 95.8 161.0 97.5 163.5 99.3 166.0 100.9 168.5 102.5 171.0 104.0 173.5 105.5 176.0 107.0 178.5 108.6 181.0 110.2 183.5 111.9 186.0 113.7 188.5 115.7 191.0 117.7 193.5 119.8 196.0 122.1 198.0 123.9" stroke="url(#cool)" stroke-width="0.95" opacity="1"/>
<path d="M111.0 171.6 113.5 171.4 116.0 171.2 118.5 171.1 121.0 170.9 123.5 170.9 126.0 170.9 128.5 171.0 131.0 171.1 133.5 171.2 136.0 171.2 138.5 171.2 141.0 171.0 143.5 170.8 146.0 170.4 148.5 169.7 151.0 168.8 153.5 167.6 156.0 166.2 158.5 164.6 161.0 162.9 163.5 161.1 166.0 159.5 168.5 157.9 171.0 156.4 173.5 154.9 176.0 153.4 178.5 151.8 181.0 150.2 183.5 148.5 186.0 146.7 188.5 144.7 191.0 142.7 193.5 140.6 196.0 138.3 198.0 136.5" stroke="url(#cool)" stroke-width="0.95" opacity="1"/>
<path d="M89.0 91.4 91.0 91.4" stroke="url(#heat)" stroke-width="0.95" opacity="1"/>
<path d="M89.0 169.0 91.0 169.0" stroke="url(#heat)" stroke-width="0.95" opacity="1"/>
<path d="M89.0 91.4 91.0 91.4" stroke="url(#heat)" stroke-width="0.95" opacity="1"/>
<path d="M89.0 169.0 91.0 169.0" stroke="url(#heat)" stroke-width="0.95" opacity="1"/>
<path d="M89.0 91.4 91.0 91.4" stroke="url(#cool)" stroke-width="0.95" opacity="1"/>
<path d="M89.0 169.0 91.0 169.0" stroke="url(#cool)" stroke-width="0.95" opacity="1"/>
<path d="M89.0 85.6 91.0 85.6" stroke="url(#heat)" stroke-width="0.95" opacity="1"/>
<path d="M89.0 174.8 91.0 174.8" stroke="url(#heat)" stroke-width="0.95" opacity="1"/>
<path d="M89.0 85.6 91.0 85.6" stroke="url(#heat)" stroke-width="0.95" opacity="1"/>
<path d="M89.0 174.8 91.0 174.8" stroke="url(#heat)" stroke-width="0.95" opacity="1"/>
<path d="M91.0 85.6 99.0 86.3 110.0 88.8" stroke="url(#heat)" stroke-width="1.15" opacity="1"/>
<path d="M91.0 174.8 99.0 174.1 110.0 171.6" stroke="url(#heat)" stroke-width="1.15" opacity="1"/>
<path d="M91.0 91.4 99.0 90.8 110.0 88.8" stroke="url(#heat)" stroke-width="1.15" opacity="1"/>
<path d="M91.0 169.0 99.0 169.6 110.0 171.6" stroke="url(#heat)" stroke-width="1.15" opacity="1"/>
<ellipse cx="125" cy="90.0" rx="19" ry="2.8" fill="#38f080" opacity="0.75" filter="url(#fz)"/>
<ellipse cx="121" cy="89.7" rx="7" ry="1.6" fill="#90ff40" opacity="0.55" filter="url(#fz)"/>
<ellipse cx="125" cy="170.4" rx="19" ry="2.8" fill="#38f080" opacity="0.75" filter="url(#fz)"/>
<ellipse cx="121" cy="170.7" rx="7" ry="1.6" fill="#90ff40" opacity="0.55" filter="url(#fz)"/>
<path d="M310.0 88.8 312.5 89.0 315.0 89.1 317.5 89.3 320.0 89.5 322.5 89.8 325.0 90.2 327.5 90.6 330.0 91.2 332.5 91.9 335.0 92.7 337.5 93.7 340.0 94.8 342.5 96.0 345.0 97.4 347.5 99.1 350.0 100.9 352.5 103.0 355.0 105.2 357.5 107.5 360.0 109.8 362.5 112.0 365.0 114.0 367.5 115.7 370.0 117.2 372.5 118.7 375.0 120.2 377.5 121.8 380.0 123.4 382.5 125.1 385.0 126.9 387.5 128.9 390.0 130.9 392.5 133.0 395.0 135.3 397.0 137.1" stroke="url(#heat)" stroke-width="0.95" opacity="1"/>
<path d="M310.0 171.6 312.5 171.4 315.0 171.2 317.5 171.1 320.0 170.9 322.5 170.6 325.0 170.2 327.5 169.8 330.0 169.2 332.5 168.5 335.0 167.7 337.5 166.7 340.0 165.6 342.5 164.4 345.0 163.0 347.5 161.3 350.0 159.5 352.5 157.4 355.0 155.2 357.5 152.9 360.0 150.6 362.5 148.4 365.0 146.4 367.5 144.7 370.0 143.2 372.5 141.7 375.0 140.2 377.5 138.6 380.0 137.0 382.5 135.3 385.0 133.5 387.5 131.5 390.0 129.5 392.5 127.4 395.0 125.1 397.0 123.3" stroke="url(#heat)" stroke-width="0.95" opacity="1"/>
<path d="M310.0 88.8 312.5 89.0 315.0 89.1 317.5 89.3 320.0 89.5 322.5 89.7 325.0 90.0 327.5 90.3 330.0 90.7 332.5 91.2 335.0 91.9 337.5 92.6 340.0 93.4 342.5 94.4 345.0 95.6 347.5 97.0 350.0 98.6 352.5 100.5 355.0 102.5 357.5 104.6 360.0 106.7 362.5 108.8 365.0 110.7 367.5 112.4 370.0 113.9 372.5 115.4 375.0 116.9 377.5 118.5 380.0 120.1 382.5 121.8 385.0 123.6 387.5 125.6 390.0 127.6 392.5 129.7 395.0 132.0 397.0 133.8" stroke="url(#heat)" stroke-width="0.95" opacity="1"/>
<path d="M310.0 171.6 312.5 171.4 315.0 171.2 317.5 171.1 320.0 170.9 322.5 170.7 325.0 170.4 327.5 170.1 330.0 169.7 332.5 169.2 335.0 168.5 337.5 167.8 340.0 167.0 342.5 166.0 345.0 164.8 347.5 163.4 350.0 161.8 352.5 159.9 355.0 157.9 357.5 155.8 360.0 153.7 362.5 151.6 365.0 149.7 367.5 148.0 370.0 146.5 372.5 145.0 375.0 143.5 377.5 141.9 380.0 140.3 382.5 138.6 385.0 136.8 387.5 134.8 390.0 132.8 392.5 130.7 395.0 128.4 397.0 126.6" stroke="url(#heat)" stroke-width="0.95" opacity="1"/>
<path d="M310.0 88.8 312.5 89.0 315.0 89.1 317.5 89.3 320.0 89.5 322.5 89.7 325.0 89.8 327.5 90.0 330.0 90.3 332.5 90.6 335.0 91.0 337.5 91.5 340.0 92.1 342.5 92.8 345.0 93.7 347.5 94.9 350.0 96.3 352.5 97.9 355.0 99.7 357.5 101.7 360.0 103.7 362.5 105.6 365.0 107.5 367.5 109.1 370.0 110.6 372.5 112.1 375.0 113.6 377.5 115.2 380.0 116.8 382.5 118.5 385.0 120.3 387.5 122.3 390.0 124.3 392.5 126.4 395.0 128.7 397.0 130.5" stroke="url(#heat)" stroke-width="0.95" opacity="1"/>
<path d="M310.0 171.6 312.5 171.4 315.0 171.2 317.5 171.1 320.0 170.9 322.5 170.7 325.0 170.6 327.5 170.4 330.0 170.1 332.5 169.8 335.0 169.4 337.5 168.9 340.0 168.3 342.5 167.6 345.0 166.7 347.5 165.5 350.0 164.1 352.5 162.5 355.0 160.7 357.5 158.7 360.0 156.7 362.5 154.8 365.0 152.9 367.5 151.3 370.0 149.8 372.5 148.3 375.0 146.8 377.5 145.2 380.0 143.6 382.5 141.9 385.0 140.1 387.5 138.1 390.0 136.1 392.5 134.0 395.0 131.7 397.0 129.9" stroke="url(#heat)" stroke-width="0.95" opacity="1"/>
<path d="M310.0 88.8 312.5 89.0 315.0 89.1 317.5 89.3 320.0 89.5 322.5 89.6 325.0 89.7 327.5 89.7 330.0 89.8 332.5 89.9 335.0 90.1 337.5 90.3 340.0 90.7 342.5 91.2 345.0 91.9 347.5 92.8 350.0 94.0 352.5 95.4 355.0 97.0 357.5 98.7 360.0 100.6 362.5 102.4 365.0 104.2 367.5 105.8 370.0 107.3 372.5 108.8 375.0 110.3 377.5 111.9 380.0 113.5 382.5 115.2 385.0 117.0 387.5 119.0 390.0 121.0 392.5 123.1 395.0 125.4 397.0 127.2" stroke="url(#heat)" stroke-width="0.95" opacity="1"/>
<path d="M310.0 171.6 312.5 171.4 315.0 171.2 317.5 171.1 320.0 170.9 322.5 170.8 325.0 170.7 327.5 170.7 330.0 170.6 332.5 170.5 335.0 170.3 337.5 170.1 340.0 169.7 342.5 169.2 345.0 168.5 347.5 167.6 350.0 166.4 352.5 165.0 355.0 163.4 357.5 161.7 360.0 159.8 362.5 158.0 365.0 156.2 367.5 154.6 370.0 153.1 372.5 151.6 375.0 150.1 377.5 148.5 380.0 146.9 382.5 145.2 385.0 143.4 387.5 141.4 390.0 139.4 392.5 137.3 395.0 135.0 397.0 133.2" stroke="url(#heat)" stroke-width="0.95" opacity="1"/>
<path d="M310.0 88.8 312.5 89.0 315.0 89.1 317.5 89.3 320.0 89.5 322.5 89.5 325.0 89.5 327.5 89.4 330.0 89.3 332.5 89.2 335.0 89.2 337.5 89.2 340.0 89.4 342.5 89.6 345.0 90.0 347.5 90.7 350.0 91.6 352.5 92.8 355.0 94.2 357.5 95.8 360.0 97.5 362.5 99.3 365.0 100.9 367.5 102.5 370.0 104.0 372.5 105.5 375.0 107.0 377.5 108.6 380.0 110.2 382.5 111.9 385.0 113.7 387.5 115.7 390.0 117.7 392.5 119.8 395.0 122.1 397.0 123.9" stroke="url(#cool)" stroke-width="0.95" opacity="1"/>
<path d="M310.0 171.6 312.5 171.4 315.0 171.2 317.5 171.1 320.0 170.9 322.5 170.9 325.0 170.9 327.5 171.0 330.0 171.1 332.5 171.2 335.0 171.2 337.5 171.2 340.0 171.0 342.5 170.8 345.0 170.4 347.5 169.7 350.0 168.8 352.5 167.6 355.0 166.2 357.5 164.6 360.0 162.9 362.5 161.1 365.0 159.5 367.5 157.9 370.0 156.4 372.5 154.9 375.0 153.4 377.5 151.8 380.0 150.2 382.5 148.5 385.0 146.7 387.5 144.7 390.0 142.7 392.5 140.6 395.0 138.3 397.0 136.5" stroke="url(#cool)" stroke-width="0.95" opacity="1"/>
<path d="M198.0 137.1 200.5 134.9 203.0 132.7 205.5 130.6 208.0 128.6 210.5 126.7 213.0 124.8 215.5 123.1 218.0 121.4 220.5 119.7 223.0 118.0 225.5 116.1 228.0 114.1 230.5 112.0 233.0 109.8 235.5 107.6 238.0 105.3 240.5 103.2 243.0 101.2 245.5 99.5 248.0 98.0 250.5 96.8 253.0 95.7 255.5 94.8 258.0 94.0 260.5 93.4 263.0 92.9 265.5 92.5 268.0 92.2 270.5 91.9 273.0 91.8 275.5 91.6 278.0 91.5 280.5 91.5 283.0 91.4 285.5 91.4 288.0 91.4 290.0 91.4" stroke="url(#heat)" stroke-width="0.95" opacity="1"/>
<path d="M198.0 123.3 200.5 125.5 203.0 127.7 205.5 129.8 208.0 131.8 210.5 133.7 213.0 135.6 215.5 137.3 218.0 139.0 220.5 140.7 223.0 142.4 225.5 144.3 228.0 146.3 230.5 148.4 233.0 150.6 235.5 152.8 238.0 155.1 240.5 157.2 243.0 159.2 245.5 160.9 248.0 162.4 250.5 163.6 253.0 164.7 255.5 165.6 258.0 166.4 260.5 167.0 263.0 167.5 265.5 167.9 268.0 168.2 270.5 168.5 273.0 168.6 275.5 168.8 278.0 168.9 280.5 168.9 283.0 169.0 285.5 169.0 288.0 169.0 290.0 169.0" stroke="url(#heat)" stroke-width="0.95" opacity="1"/>
<path d="M198.0 133.8 200.5 131.6 203.0 129.4 205.5 127.3 208.0 125.3 210.5 123.4 213.0 121.5 215.5 119.8 218.0 118.1 220.5 116.4 223.0 114.7 225.5 112.8 228.0 110.9 230.5 108.9 233.0 106.8 235.5 104.7 238.0 102.6 240.5 100.6 243.0 98.8 245.5 97.2 248.0 95.9 250.5 94.8 253.0 93.9 255.5 93.2 258.0 92.6 260.5 92.1 263.0 91.8 265.5 91.6 268.0 91.4 270.5 91.3 273.0 91.3 275.5 91.3 278.0 91.3 280.5 91.3 283.0 91.3 285.5 91.4 288.0 91.4 290.0 91.4" stroke="url(#heat)" stroke-width="0.95" opacity="1"/>
<path d="M198.0 126.6 200.5 128.8 203.0 131.0 205.5 133.1 208.0 135.1 210.5 137.0 213.0 138.9 215.5 140.6 218.0 142.3 220.5 144.0 223.0 145.7 225.5 147.6 228.0 149.5 230.5 151.5 233.0 153.6 235.5 155.7 238.0 157.8 240.5 159.8 243.0 161.6 245.5 163.2 248.0 164.5 250.5 165.6 253.0 166.5 255.5 167.2 258.0 167.8 260.5 168.3 263.0 168.6 265.5 168.8 268.0 169.0 270.5 169.1 273.0 169.1 275.5 169.1 278.0 169.1 280.5 169.1 283.0 169.1 285.5 169.0 288.0 169.0 290.0 169.0" stroke="url(#heat)" stroke-width="0.95" opacity="1"/>
<path d="M198.0 130.5 200.5 128.3 203.0 126.1 205.5 124.0 208.0 122.0 210.5 120.1 213.0 118.2 215.5 116.5 218.0 114.8 220.5 113.1 223.0 111.4 225.5 109.6 228.0 107.7 230.5 105.8 233.0 103.8 235.5 101.8 238.0 99.8 240.5 98.0 243.0 96.3 245.5 94.9 248.0 93.8 250.5 92.9 253.0 92.2 255.5 91.6 258.0 91.2 260.5 90.9 263.0 90.7 265.5 90.6 268.0 90.6 270.5 90.7 273.0 90.8 275.5 90.9 278.0 91.0 280.5 91.1 283.0 91.2 285.5 91.3 288.0 91.4 290.0 91.4" stroke="url(#cool)" stroke-width="0.95" opacity="1"/>
<path d="M198.0 129.9 200.5 132.1 203.0 134.3 205.5 136.4 208.0 138.4 210.5 140.3 213.0 142.2 215.5 143.9 218.0 145.6 220.5 147.3 223.0 149.0 225.5 150.8 228.0 152.7 230.5 154.6 233.0 156.6 235.5 158.6 238.0 160.6 240.5 162.4 243.0 164.1 245.5 165.5 248.0 166.6 250.5 167.5 253.0 168.2 255.5 168.8 258.0 169.2 260.5 169.5 263.0 169.7 265.5 169.8 268.0 169.8 270.5 169.7 273.0 169.6 275.5 169.5 278.0 169.4 280.5 169.3 283.0 169.2 285.5 169.1 288.0 169.0 290.0 169.0" stroke="url(#cool)" stroke-width="0.95" opacity="1"/>
<path d="M198.0 127.2 200.5 125.0 203.0 122.8 205.5 120.7 208.0 118.7 210.5 116.8 213.0 114.9 215.5 113.2 218.0 111.5 220.5 109.8 223.0 108.1 225.5 106.2 228.0 104.3 230.5 102.3 233.0 100.3 235.5 98.2 238.0 96.1 240.5 94.1 243.0 92.4 245.5 90.8 248.0 89.6 250.5 88.6 253.0 87.7 255.5 87.0 258.0 86.5 260.5 86.0 263.0 85.7 265.5 85.5 268.0 85.4 270.5 85.4 273.0 85.4 275.5 85.4 278.0 85.4 280.5 85.5 283.0 85.5 285.5 85.6 288.0 85.6 290.0 85.6" stroke="url(#heat)" stroke-width="0.95" opacity="1"/>
<path d="M198.0 133.2 200.5 135.4 203.0 137.6 205.5 139.7 208.0 141.7 210.5 143.6 213.0 145.5 215.5 147.2 218.0 148.9 220.5 150.6 223.0 152.3 225.5 154.2 228.0 156.1 230.5 158.1 233.0 160.1 235.5 162.2 238.0 164.3 240.5 166.3 243.0 168.0 245.5 169.6 248.0 170.8 250.5 171.8 253.0 172.7 255.5 173.4 258.0 173.9 260.5 174.4 263.0 174.7 265.5 174.9 268.0 175.0 270.5 175.0 273.0 175.0 275.5 175.0 278.0 175.0 280.5 174.9 283.0 174.9 285.5 174.8 288.0 174.8 290.0 174.8" stroke="url(#heat)" stroke-width="0.95" opacity="1"/>
<path d="M198.0 123.9 200.5 121.7 203.0 119.5 205.5 117.4 208.0 115.4 210.5 113.5 213.0 111.6 215.5 109.9 218.0 108.2 220.5 106.5 223.0 104.8 225.5 103.0 228.0 101.1 230.5 99.2 233.0 97.3 235.5 95.3 238.0 93.3 240.5 91.5 243.0 89.9 245.5 88.5 248.0 87.4 250.5 86.6 253.0 85.9 255.5 85.4 258.0 85.0 260.5 84.8 263.0 84.6 265.5 84.6 268.0 84.7 270.5 84.7 273.0 84.9 275.5 85.0 278.0 85.2 280.5 85.3 283.0 85.4 285.5 85.5 288.0 85.6 290.0 85.6" stroke="url(#heat)" stroke-width="0.95" opacity="1"/>
<path d="M198.0 136.5 200.5 138.7 203.0 140.9 205.5 143.0 208.0 145.0 210.5 146.9 213.0 148.8 215.5 150.5 218.0 152.2 220.5 153.9 223.0 155.6 225.5 157.4 228.0 159.3 230.5 161.2 233.0 163.1 235.5 165.1 238.0 167.1 240.5 168.9 243.0 170.5 245.5 171.9 248.0 173.0 250.5 173.8 253.0 174.5 255.5 175.0 258.0 175.4 260.5 175.6 263.0 175.8 265.5 175.8 268.0 175.7 270.5 175.7 273.0 175.5 275.5 175.4 278.0 175.2 280.5 175.1 283.0 175.0 285.5 174.9 288.0 174.8 290.0 174.8" stroke="url(#heat)" stroke-width="0.95" opacity="1"/>
<path d="M260.0 86.1 275.0 85.9 290.0 85.6 298.0 86.3 309.0 88.8" stroke="url(#heat)" stroke-width="1.15" opacity="1"/>
<path d="M260.0 174.3 275.0 174.5 290.0 174.8 298.0 174.1 309.0 171.6" stroke="url(#heat)" stroke-width="1.15" opacity="1"/>
<path d="M260.0 92.3 275.0 91.7 290.0 91.4 298.0 90.8 309.0 88.8" stroke="url(#heat)" stroke-width="1.15" opacity="1"/>
<path d="M260.0 168.1 275.0 168.7 290.0 169.0 298.0 169.6 309.0 171.6" stroke="url(#heat)" stroke-width="1.15" opacity="1"/>
<ellipse cx="324" cy="90.0" rx="19" ry="2.8" fill="#38f080" opacity="0.75" filter="url(#fz)"/>
<ellipse cx="320" cy="89.7" rx="7" ry="1.6" fill="#90ff40" opacity="0.55" filter="url(#fz)"/>
<ellipse cx="324" cy="170.4" rx="19" ry="2.8" fill="#38f080" opacity="0.75" filter="url(#fz)"/>
<ellipse cx="320" cy="170.7" rx="7" ry="1.6" fill="#90ff40" opacity="0.55" filter="url(#fz)"/>
<path d="M397.0 137.1 399.5 134.9 402.0 132.8 404.5 130.7 407.0 128.7 409.5 126.7 412.0 124.7 414.5 122.8 417.0 120.8 419.5 118.9 422.0 116.9 424.5 114.9 427.0 112.8 429.5 110.8 432.0 108.9 434.5 107.1 437.0 105.3 439.5 103.6 442.0 102.0 444.5 100.5 447.0 99.2 449.5 98.0 452.0 96.9 454.5 96.0 457.0 95.1 459.5 94.4 462.0 93.7 464.5 93.2 467.0 92.7 469.5 92.4 472.0 92.1 474.5 91.8 477.0 91.6 479.5 91.5 482.0 91.5 484.5 91.4 487.0 91.4 489.0 91.4" stroke="url(#heat)" stroke-width="0.95" opacity="1"/>
<path d="M397.0 123.3 399.5 125.5 402.0 127.6 404.5 129.7 407.0 131.7 409.5 133.7 412.0 135.7 414.5 137.6 417.0 139.6 419.5 141.5 422.0 143.5 424.5 145.5 427.0 147.6 429.5 149.6 432.0 151.5 434.5 153.3 437.0 155.1 439.5 156.8 442.0 158.4 444.5 159.9 447.0 161.2 449.5 162.4 452.0 163.5 454.5 164.4 457.0 165.3 459.5 166.0 462.0 166.7 464.5 167.2 467.0 167.7 469.5 168.0 472.0 168.3 474.5 168.6 477.0 168.8 479.5 168.9 482.0 168.9 484.5 169.0 487.0 169.0 489.0 169.0" stroke="url(#heat)" stroke-width="0.95" opacity="1"/>
<path d="M397.0 133.8 399.5 131.6 402.0 129.5 404.5 127.4 407.0 125.4 409.5 123.4 412.0 121.4 414.5 119.5 417.0 117.5 419.5 115.6 422.0 113.6 424.5 111.6 427.0 109.6 429.5 107.7 432.0 105.9 434.5 104.2 437.0 102.5 439.5 101.0 442.0 99.5 444.5 98.2 447.0 97.1 449.5 96.0 452.0 95.1 454.5 94.3 457.0 93.7 459.5 93.1 462.0 92.6 464.5 92.2 467.0 91.9 469.5 91.7 472.0 91.6 474.5 91.5 477.0 91.4 479.5 91.4 482.0 91.4 484.5 91.4 487.0 91.4 489.0 91.4" stroke="url(#heat)" stroke-width="0.95" opacity="1"/>
<path d="M397.0 126.6 399.5 128.8 402.0 130.9 404.5 133.0 407.0 135.0 409.5 137.0 412.0 139.0 414.5 140.9 417.0 142.9 419.5 144.8 422.0 146.8 424.5 148.8 427.0 150.8 429.5 152.7 432.0 154.5 434.5 156.2 437.0 157.9 439.5 159.4 442.0 160.9 444.5 162.2 447.0 163.3 449.5 164.4 452.0 165.3 454.5 166.1 457.0 166.7 459.5 167.3 462.0 167.8 464.5 168.2 467.0 168.5 469.5 168.7 472.0 168.8 474.5 168.9 477.0 169.0 479.5 169.0 482.0 169.0 484.5 169.0 487.0 169.0 489.0 169.0" stroke="url(#heat)" stroke-width="0.95" opacity="1"/>
<path d="M397.0 130.5 399.5 128.3 402.0 126.2 404.5 124.1 407.0 122.1 409.5 120.1 412.0 118.1 414.5 116.2 417.0 114.2 419.5 112.3 422.0 110.4 424.5 108.4 427.0 106.5 429.5 104.6 432.0 102.9 434.5 101.3 437.0 99.8 439.5 98.4 442.0 97.1 444.5 95.9 447.0 94.9 449.5 94.1 452.0 93.3 454.5 92.7 457.0 92.2 459.5 91.8 462.0 91.5 464.5 91.3 467.0 91.2 469.5 91.1 472.0 91.1 474.5 91.1 477.0 91.1 479.5 91.2 482.0 91.3 484.5 91.3 487.0 91.4 489.0 91.4" stroke="url(#cool)" stroke-width="0.95" opacity="1"/>
<path d="M397.0 129.9 399.5 132.1 402.0 134.2 404.5 136.3 407.0 138.3 409.5 140.3 412.0 142.3 414.5 144.2 417.0 146.2 419.5 148.1 422.0 150.0 424.5 152.0 427.0 153.9 429.5 155.8 432.0 157.5 434.5 159.1 437.0 160.6 439.5 162.0 442.0 163.3 444.5 164.5 447.0 165.5 449.5 166.3 452.0 167.1 454.5 167.7 457.0 168.2 459.5 168.6 462.0 168.9 464.5 169.1 467.0 169.2 469.5 169.3 472.0 169.3 474.5 169.3 477.0 169.3 479.5 169.2 482.0 169.1 484.5 169.1 487.0 169.0 489.0 169.0" stroke="url(#cool)" stroke-width="0.95" opacity="1"/>
<path d="M397.0 127.2 399.5 125.0 402.0 122.9 404.5 120.8 407.0 118.8 409.5 116.8 412.0 114.8 414.5 112.9 417.0 110.9 419.5 109.0 422.0 107.0 424.5 105.0 427.0 103.1 429.5 101.2 432.0 99.4 434.5 97.7 437.0 96.1 439.5 94.5 442.0 93.1 444.5 91.9 447.0 90.8 449.5 89.8 452.0 88.9 454.5 88.2 457.0 87.5 459.5 87.0 462.0 86.6 464.5 86.2 467.0 86.0 469.5 85.8 472.0 85.6 474.5 85.6 477.0 85.5 479.5 85.5 482.0 85.5 484.5 85.6 487.0 85.6 489.0 85.6" stroke="url(#heat)" stroke-width="0.95" opacity="1"/>
<path d="M397.0 133.2 399.5 135.4 402.0 137.5 404.5 139.6 407.0 141.6 409.5 143.6 412.0 145.6 414.5 147.5 417.0 149.5 419.5 151.4 422.0 153.4 424.5 155.4 427.0 157.3 429.5 159.2 432.0 161.0 434.5 162.7 437.0 164.3 439.5 165.9 442.0 167.3 444.5 168.5 447.0 169.6 449.5 170.6 452.0 171.5 454.5 172.2 457.0 172.9 459.5 173.4 462.0 173.8 464.5 174.2 467.0 174.4 469.5 174.6 472.0 174.8 474.5 174.8 477.0 174.9 479.5 174.9 482.0 174.9 484.5 174.8 487.0 174.8 489.0 174.8" stroke="url(#heat)" stroke-width="0.95" opacity="1"/>
<path d="M397.0 123.9 399.5 121.7 402.0 119.6 404.5 117.5 407.0 115.5 409.5 113.5 412.0 111.5 414.5 109.6 417.0 107.6 419.5 105.7 422.0 103.8 424.5 101.8 427.0 99.9 429.5 98.1 432.0 96.4 434.5 94.8 437.0 93.3 439.5 91.9 442.0 90.7 444.5 89.6 447.0 88.6 449.5 87.8 452.0 87.1 454.5 86.5 457.0 86.1 459.5 85.7 462.0 85.5 464.5 85.3 467.0 85.2 469.5 85.1 472.0 85.2 474.5 85.2 477.0 85.3 479.5 85.4 482.0 85.5 484.5 85.5 487.0 85.6 489.0 85.6" stroke="url(#heat)" stroke-width="0.95" opacity="1"/>
<path d="M397.0 136.5 399.5 138.7 402.0 140.8 404.5 142.9 407.0 144.9 409.5 146.9 412.0 148.9 414.5 150.8 417.0 152.8 419.5 154.7 422.0 156.6 424.5 158.6 427.0 160.5 429.5 162.3 432.0 164.0 434.5 165.6 437.0 167.1 439.5 168.5 442.0 169.7 444.5 170.8 447.0 171.8 449.5 172.6 452.0 173.3 454.5 173.9 457.0 174.3 459.5 174.7 462.0 174.9 464.5 175.1 467.0 175.2 469.5 175.3 472.0 175.2 474.5 175.2 477.0 175.1 479.5 175.0 482.0 174.9 484.5 174.9 487.0 174.8 489.0 174.8" stroke="url(#heat)" stroke-width="0.95" opacity="1"/>
<path d="M459.0 86.1 474.0 85.9 489.0 85.6" stroke="url(#heat)" stroke-width="1.15" opacity="1"/>
<path d="M459.0 174.3 474.0 174.5 489.0 174.8" stroke="url(#heat)" stroke-width="1.15" opacity="1"/>
<path d="M459.0 92.3 474.0 91.7 489.0 91.4" stroke="url(#heat)" stroke-width="1.15" opacity="1"/>
<path d="M459.0 168.1 474.0 168.7 489.0 169.0" stroke="url(#heat)" stroke-width="1.15" opacity="1"/>
<ellipse cx="523" cy="90.0" rx="19" ry="2.8" fill="#38f080" opacity="0.75" filter="url(#fz)"/>
<ellipse cx="519" cy="89.7" rx="7" ry="1.6" fill="#90ff40" opacity="0.55" filter="url(#fz)"/>
<ellipse cx="523" cy="170.4" rx="19" ry="2.8" fill="#38f080" opacity="0.75" filter="url(#fz)"/>
<ellipse cx="519" cy="170.7" rx="7" ry="1.6" fill="#90ff40" opacity="0.55" filter="url(#fz)"/>
<ellipse cx="198.2" cy="130.2" rx="4.5" ry="3.5" fill="#30e890" opacity="0.32" filter="url(#fz)"/>
<ellipse cx="396.7" cy="130.2" rx="4.5" ry="3.5" fill="#30e890" opacity="0.32" filter="url(#fz)"/>
</g>
<rect x="497.4" y="62.6" width="27.7" height="2.53" fill="#ff0000"/>
<rect x="497.4" y="64.83" width="27.7" height="2.53" fill="#ff0000"/>
<rect x="497.4" y="67.06" width="27.7" height="2.53" fill="#ff0000"/>
<rect x="497.4" y="69.29" width="27.7" height="2.53" fill="#ff3500"/>
<rect x="497.4" y="71.51" width="27.7" height="2.53" fill="#ff7100"/>
<rect x="497.4" y="73.74" width="27.7" height="2.53" fill="#ffa200"/>
<rect x="497.4" y="75.97" width="27.7" height="2.53" fill="#ffcf00"/>
<rect x="497.4" y="78.2" width="27.7" height="2.53" fill="#fffc00"/>
<rect x="497.4" y="80.43" width="27.7" height="2.53" fill="#dcff00"/>
<rect x="497.4" y="82.66" width="27.7" height="2.53" fill="#b3ff00"/>
<rect x="497.4" y="84.89" width="27.7" height="2.53" fill="#82ff00"/>
<rect x="497.4" y="87.11" width="27.7" height="2.53" fill="#51ff00"/>
<rect x="497.4" y="89.34" width="27.7" height="2.53" fill="#20ff00"/>
<rect x="497.4" y="91.57" width="27.7" height="2.53" fill="#00ff03"/>
<rect x="497.4" y="93.8" width="27.7" height="2.53" fill="#00ff0c"/>
<rect x="497.4" y="96.03" width="27.7" height="2.53" fill="#00ff15"/>
<rect x="497.4" y="98.26" width="27.7" height="2.53" fill="#00ff1d"/>
<rect x="497.4" y="100.49" width="27.7" height="2.53" fill="#00ff3e"/>
<rect x="497.4" y="102.71" width="27.7" height="2.53" fill="#00ff69"/>
<rect x="497.4" y="104.94" width="27.7" height="2.53" fill="#00ff93"/>
<rect x="497.4" y="107.17" width="27.7" height="2.53" fill="#00ffbc"/>
<rect x="497.4" y="109.4" width="27.7" height="2.53" fill="#00f4e1"/>
<rect x="497.4" y="111.63" width="27.7" height="2.53" fill="#00dbff"/>
<rect x="497.4" y="113.86" width="27.7" height="2.53" fill="#00aeff"/>
<rect x="497.4" y="116.09" width="27.7" height="2.53" fill="#006eff"/>
<rect x="497.4" y="118.31" width="27.7" height="2.53" fill="#0027ff"/>
<rect x="497.4" y="120.54" width="27.7" height="2.53" fill="#0000ff"/>
<rect x="497.4" y="122.77" width="27.7" height="2.53" fill="#0000ff"/>
<text x="496.6" y="57" font-size="6.5" fill="#000" textLength="28.7" lengthAdjust="spacingAndGlyphs">7.881E-03</text>
<text x="496.6" y="134.8" font-size="6.5" fill="#000" textLength="33" lengthAdjust="spacingAndGlyphs">4.941E-324</text>
<rect x="576" y="25.3" width="135" height="12.7" fill="#f0f0f0"/>
<line x1="576" y1="25.8" x2="711" y2="25.8" stroke="#ffffff" stroke-width="1"/>
<line x1="576.5" y1="25.3" x2="576.5" y2="38" stroke="#ffffff" stroke-width="1"/>
<line x1="576" y1="37.5" x2="711" y2="37.5" stroke="#696969" stroke-width="1"/>
<line x1="710.5" y1="25.3" x2="710.5" y2="38" stroke="#696969" stroke-width="1"/>
<line x1="577" y1="36.5" x2="710" y2="36.5" stroke="#a0a0a0" stroke-width="1"/>
<line x1="709.5" y1="26.3" x2="709.5" y2="37" stroke="#a0a0a0" stroke-width="1"/>
<text x="643.5" y="34.35" font-size="8" fill="#000" text-anchor="middle" textLength="56" lengthAdjust="spacingAndGlyphs">Plot Environment</text>
<rect x="576" y="40" width="135" height="160" fill="#fff"/>
<line x1="576" y1="40.5" x2="711" y2="40.5" stroke="#8e8e8e" stroke-width="1"/>
<line x1="576.5" y1="40" x2="576.5" y2="200" stroke="#8e8e8e" stroke-width="1"/>
<line x1="577" y1="41.5" x2="710" y2="41.5" stroke="#c8c8c8" stroke-width="1"/>
<line x1="577.5" y1="41" x2="577.5" y2="199" stroke="#c8c8c8" stroke-width="1"/>
<line x1="576" y1="199.5" x2="711" y2="199.5" stroke="#ffffff" stroke-width="1"/>
<line x1="710.5" y1="40" x2="710.5" y2="200" stroke="#ffffff" stroke-width="1"/>
<rect x="595.6" y="43" width="64.8" height="9" fill="#ececec"/>
<rect x="580.0" y="45.5" width="6" height="6" fill="#fff" stroke="#555" stroke-width="0.9"/>
<text x="596.7" y="50.3" font-size="8" fill="#000" textLength="63.3" lengthAdjust="spacingAndGlyphs">MCU_HOST_USB+</text>
<rect x="580.5" y="55.6" width="4.3" height="4.3" fill="#fff" stroke="#a8a8a8" stroke-width="0.9"/>
<line x1="581.6" y1="57.8" x2="583.8" y2="57.8" stroke="#666" stroke-width="0.9"/>
<line x1="585.5" y1="57.8" x2="589.5" y2="57.8" stroke="#c4c4c4" stroke-width="0.9"/>
<line x1="582.4" y1="51.5" x2="582.4" y2="55.5" stroke="#c4c4c4" stroke-width="0.9"/>
<rect x="589.9" y="56.1" width="6" height="6" fill="#fff" stroke="#555" stroke-width="0.9"/>
<text x="607.3" y="60.5" font-size="8" fill="#000" textLength="101.7" lengthAdjust="spacingAndGlyphs">MCU_HOST_USB+__MCU_HO</text>
<line x1="592.5" y1="62" x2="592.5" y2="68.2" stroke="#c4c4c4" stroke-width="0.9"/>
<line x1="592.5" y1="68.2" x2="599.5" y2="68.2" stroke="#c4c4c4" stroke-width="0.9"/>
<rect x="599.8" y="66.5" width="6" height="6" fill="#fff" stroke="#555" stroke-width="0.9"/>
<path d="M601.0 69.4L602.3 71L604.6999999999999 67.8" stroke="#000" stroke-width="1" fill="none"/>
<rect x="607" y="64.1" width="7.1" height="6.9" fill="#ff0000"/>
<text x="617.9" y="70.8" font-size="8" fill="#000" textLength="51.5" lengthAdjust="spacingAndGlyphs">CN2_3__CN2_2</text>
<rect x="578" y="189" width="131" height="9.5" fill="#f0f0f0"/>
<rect x="589" y="189.2" width="89.6" height="9" fill="#cdcdcd"/>
<path d="M584.3 191.2L581.8 193.7L584.3 196.2" stroke="#505050" stroke-width="1.1" fill="none"/>
<path d="M703.2 191.2L705.7 193.7L703.2 196.2" stroke="#505050" stroke-width="1.1" fill="none"/>
<path d="M580.7 207.0H577.5V230.5H710.0V207.0H603.2" fill="none" stroke="#dcdcdc"/>
<text x="582.7" y="209.2" font-size="8" fill="#000" textLength="18.5" lengthAdjust="spacingAndGlyphs">Zoom</text>
<rect x="582.5" y="214" width="59.0" height="13.5" fill="#f0f0f0"/>
<line x1="582.5" y1="214.5" x2="641.5" y2="214.5" stroke="#ffffff" stroke-width="1"/>
<line x1="583.0" y1="214" x2="583.0" y2="227.5" stroke="#ffffff" stroke-width="1"/>
<line x1="582.5" y1="227.0" x2="641.5" y2="227.0" stroke="#696969" stroke-width="1"/>
<line x1="641.0" y1="214" x2="641.0" y2="227.5" stroke="#696969" stroke-width="1"/>
<line x1="583.5" y1="226.0" x2="640.5" y2="226.0" stroke="#a0a0a0" stroke-width="1"/>
<line x1="640.0" y1="215" x2="640.0" y2="226.5" stroke="#a0a0a0" stroke-width="1"/>
<text x="612.0" y="223.45" font-size="8" fill="#000" text-anchor="middle" textLength="18.8" lengthAdjust="spacingAndGlyphs">Zoom</text>
<rect x="649.5" y="214" width="59.0" height="13.5" fill="#f0f0f0"/>
<line x1="649.5" y1="214.5" x2="708.5" y2="214.5" stroke="#ffffff" stroke-width="1"/>
<line x1="650.0" y1="214" x2="650.0" y2="227.5" stroke="#ffffff" stroke-width="1"/>
<line x1="649.5" y1="227.0" x2="708.5" y2="227.0" stroke="#696969" stroke-width="1"/>
<line x1="708.0" y1="214" x2="708.0" y2="227.5" stroke="#696969" stroke-width="1"/>
<line x1="650.5" y1="226.0" x2="707.5" y2="226.0" stroke="#a0a0a0" stroke-width="1"/>
<line x1="707.0" y1="215" x2="707.0" y2="226.5" stroke="#a0a0a0" stroke-width="1"/>
<text x="679.0" y="223.45" font-size="8" fill="#000" text-anchor="middle" textLength="19.2" lengthAdjust="spacingAndGlyphs">Reset</text>
<path d="M9.7 239.5H7.0V438.5H570.5V239.5H107.4" fill="none" stroke="#dcdcdc"/>
<text x="11.7" y="241.7" font-size="8" fill="#000" textLength="93.7" lengthAdjust="spacingAndGlyphs">Bathtub (Horizontal/Vertical)</text>
<rect x="11.5" y="248" width="555" height="176" fill="#fff"/>
<line x1="11.5" y1="248" x2="11.5" y2="424.5" stroke="#c4c4c4" stroke-width="1"/>
<line x1="11.5" y1="248.5" x2="567" y2="248.5" stroke="#c4c4c4" stroke-width="1"/>
<line x1="11.5" y1="424.2" x2="567" y2="424.2" stroke="#bdbdbd" stroke-width="1"/>
<line x1="566.6" y1="248" x2="566.6" y2="424.5" stroke="#bdbdbd" stroke-width="1"/>
<rect x="62" y="248.5" width="504" height="3" fill="#cfcfcf"/>
<g stroke="#404040" stroke-width="0.7">
<path d="M62 257.00H566"/>
<path d="M62 257.00H566"/>
<path d="M62 257.92H566"/>
<path d="M62 258.94H566"/>
<path d="M62 260.10H566"/>
<path d="M62 261.45H566"/>
<path d="M62 263.03H566"/>
<path d="M62 264.5H566" stroke="#787878" stroke-width="1"/>
<path d="M62 264.97H566" stroke="#808080" stroke-width="1.6" opacity="0.25"/>
<path d="M62 267.5H566" stroke="#787878" stroke-width="1"/>
<path d="M62 267.48H566" stroke="#808080" stroke-width="1.6" opacity="0.25"/>
<path d="M62 271.5H566" stroke="#787878" stroke-width="1"/>
<path d="M62 271.01H566" stroke="#808080" stroke-width="1.6" opacity="0.25"/>
<path d="M62 277.04H566"/>
<path d="M62 277.04H566"/>
<path d="M62 277.96H566"/>
<path d="M62 278.98H566"/>
<path d="M62 280.14H566"/>
<path d="M62 281.49H566"/>
<path d="M62 283.07H566"/>
<path d="M62 285.5H566" stroke="#787878" stroke-width="1"/>
<path d="M62 285.01H566" stroke="#808080" stroke-width="1.6" opacity="0.25"/>
<path d="M62 287.5H566" stroke="#787878" stroke-width="1"/>
<path d="M62 287.52H566" stroke="#808080" stroke-width="1.6" opacity="0.25"/>
<path d="M62 291.5H566" stroke="#787878" stroke-width="1"/>
<path d="M62 291.05H566" stroke="#808080" stroke-width="1.6" opacity="0.25"/>
<path d="M62 297.08H566"/>
<path d="M62 297.08H566"/>
<path d="M62 298.00H566"/>
<path d="M62 299.02H566"/>
<path d="M62 300.18H566"/>
<path d="M62 301.53H566"/>
<path d="M62 303.11H566"/>
<path d="M62 305.5H566" stroke="#787878" stroke-width="1"/>
<path d="M62 305.05H566" stroke="#808080" stroke-width="1.6" opacity="0.25"/>
<path d="M62 307.5H566" stroke="#787878" stroke-width="1"/>
<path d="M62 307.56H566" stroke="#808080" stroke-width="1.6" opacity="0.25"/>
<path d="M62 311.5H566" stroke="#787878" stroke-width="1"/>
<path d="M62 311.09H566" stroke="#808080" stroke-width="1.6" opacity="0.25"/>
<path d="M62 317.12H566"/>
<path d="M62 317.12H566"/>
<path d="M62 318.04H566"/>
<path d="M62 319.06H566"/>
<path d="M62 320.22H566"/>
<path d="M62 321.57H566"/>
<path d="M62 323.15H566"/>
<path d="M62 325.5H566" stroke="#787878" stroke-width="1"/>
<path d="M62 325.09H566" stroke="#808080" stroke-width="1.6" opacity="0.25"/>
<path d="M62 327.5H566" stroke="#787878" stroke-width="1"/>
<path d="M62 327.60H566" stroke="#808080" stroke-width="1.6" opacity="0.25"/>
<path d="M62 331.5H566" stroke="#787878" stroke-width="1"/>
<path d="M62 331.13H566" stroke="#808080" stroke-width="1.6" opacity="0.25"/>
<path d="M62 337.16H566"/>
<path d="M62 337.16H566"/>
<path d="M62 338.08H566"/>
<path d="M62 339.10H566"/>
<path d="M62 340.26H566"/>
<path d="M62 341.61H566"/>
<path d="M62 343.19H566"/>
<path d="M62 345.5H566" stroke="#787878" stroke-width="1"/>
<path d="M62 345.13H566" stroke="#808080" stroke-width="1.6" opacity="0.25"/>
<path d="M62 347.5H566" stroke="#787878" stroke-width="1"/>
<path d="M62 347.64H566" stroke="#808080" stroke-width="1.6" opacity="0.25"/>
<path d="M62 351.5H566" stroke="#787878" stroke-width="1"/>
<path d="M62 351.17H566" stroke="#808080" stroke-width="1.6" opacity="0.25"/>
<path d="M62 357.20H566"/>
<path d="M62 357.20H566"/>
<path d="M62 358.12H566"/>
<path d="M62 359.14H566"/>
<path d="M62 360.30H566"/>
<path d="M62 361.65H566"/>
<path d="M62 363.23H566"/>
<path d="M62 365.5H566" stroke="#787878" stroke-width="1"/>
<path d="M62 365.17H566" stroke="#808080" stroke-width="1.6" opacity="0.25"/>
<path d="M62 367.5H566" stroke="#787878" stroke-width="1"/>
<path d="M62 367.68H566" stroke="#808080" stroke-width="1.6" opacity="0.25"/>
<path d="M62 371.5H566" stroke="#787878" stroke-width="1"/>
<path d="M62 371.21H566" stroke="#808080" stroke-width="1.6" opacity="0.25"/>
<path d="M62 377.24H566"/>
<path d="M62 377.24H566"/>
<path d="M62 378.16H566"/>
<path d="M62 379.18H566"/>
<path d="M62 380.34H566"/>
<path d="M62 381.69H566"/>
<path d="M62 383.27H566"/>
<path d="M62 385.5H566" stroke="#787878" stroke-width="1"/>
<path d="M62 385.21H566" stroke="#808080" stroke-width="1.6" opacity="0.25"/>
<path d="M62 387.5H566" stroke="#787878" stroke-width="1"/>
<path d="M62 387.72H566" stroke="#808080" stroke-width="1.6" opacity="0.25"/>
<path d="M62 391.5H566" stroke="#787878" stroke-width="1"/>
<path d="M62 391.25H566" stroke="#808080" stroke-width="1.6" opacity="0.25"/>
<path d="M62 397.28H566"/>
<path d="M62 397.28H566"/>
<path d="M62 398.20H566"/>
<path d="M62 399.22H566"/>
<path d="M62 400.38H566"/>
<path d="M62 401.73H566"/>
<path d="M62 403.31H566"/>
<path d="M62 405.5H566" stroke="#787878" stroke-width="1"/>
<path d="M62 405.25H566" stroke="#808080" stroke-width="1.6" opacity="0.25"/>
</g>
<text x="11.6" y="255.6" font-size="6.5" fill="#000" textLength="11" lengthAdjust="spacingAndGlyphs">BER</text>
<text x="26" y="259.90000000000003" font-size="7.5" fill="#000" textLength="3.8" lengthAdjust="spacingAndGlyphs">1</text>
<text x="25" y="279.74" font-size="7" fill="#000" textLength="9.2" lengthAdjust="spacingAndGlyphs">0.1</text>
<text x="25" y="299.78" font-size="7" fill="#000" textLength="12.9" lengthAdjust="spacingAndGlyphs">0.01</text>
<text x="25" y="319.82" font-size="7" fill="#000" textLength="16.6" lengthAdjust="spacingAndGlyphs">0.001</text>
<text x="25" y="339.86" font-size="7" fill="#000" textLength="20.2" lengthAdjust="spacingAndGlyphs">0.0001</text>
<text x="25" y="359.9" font-size="7" fill="#000" textLength="16.9" lengthAdjust="spacingAndGlyphs">1e-05</text>
<text x="25" y="379.94" font-size="7" fill="#000" textLength="16.9" lengthAdjust="spacingAndGlyphs">1e-06</text>
<text x="25" y="399.98" font-size="7" fill="#000" textLength="16.9" lengthAdjust="spacingAndGlyphs">1e-07</text>
<line x1="165.8" y1="249" x2="165.8" y2="411.3" stroke="#303030" stroke-width="0.9"/>
<text x="161.8" y="415.5" font-size="7" fill="#000" textLength="9.0" lengthAdjust="spacingAndGlyphs">0.1</text>
<line x1="290.15" y1="249" x2="290.15" y2="411.3" stroke="#303030" stroke-width="0.9"/>
<text x="286.15" y="415.5" font-size="7" fill="#000" textLength="12.5" lengthAdjust="spacingAndGlyphs">0.15</text>
<line x1="414.5" y1="249" x2="414.5" y2="411.3" stroke="#303030" stroke-width="0.9"/>
<text x="410.5" y="415.5" font-size="7" fill="#000" textLength="9.0" lengthAdjust="spacingAndGlyphs">0.2</text>
<line x1="538.85" y1="249" x2="538.85" y2="411.3" stroke="#303030" stroke-width="0.9"/>
<text x="534.85" y="415.5" font-size="7" fill="#000" textLength="12.5" lengthAdjust="spacingAndGlyphs">0.25</text>
<text x="290" y="421" font-size="7" fill="#000" textLength="24.5" lengthAdjust="spacingAndGlyphs">Time(ns)</text>
<line x1="67.4" y1="249" x2="67.4" y2="407" stroke="#111" stroke-width="1.4"/>
<line x1="66.7" y1="406.3" x2="566" y2="406.3" stroke="#111" stroke-width="1.3"/>
<path d="M91 263.2H189.9L192.8 265.3L195 268.3L198 270L200.1 270.5L202.7 273.4L203.2 277.7L204.1 280.7L205.6 282.6V289.3L206.3 291.8V403.5L207.2 404.6L209.5 405.6" stroke="#ff0000" stroke-width="1.7" fill="none" stroke-linejoin="round"/>
<path d="M487 263.2H404.1L401.6 264.5L399 267.4L396.8 268.7L394.7 268.9L392.6 270.8L391.7 273.4L391.3 276.4L390 279.8L388.8 283.3L388.3 289.3V406" stroke="#ff0000" stroke-width="1.7" fill="none" stroke-linejoin="round"/>
<rect x="15" y="426" width="103" height="9" fill="#f0f0f0"/>
<line x1="15" y1="426.5" x2="118" y2="426.5" stroke="#c8c8c8" stroke-width="1"/>
<line x1="15.5" y1="426" x2="15.5" y2="435" stroke="#c8c8c8" stroke-width="1"/>
<line x1="15" y1="434.5" x2="118" y2="434.5" stroke="#ffffff" stroke-width="1"/>
<line x1="117.5" y1="426" x2="117.5" y2="435" stroke="#ffffff" stroke-width="1"/>
<text x="19" y="433.2" font-size="8" fill="#000" textLength="73.6" lengthAdjust="spacingAndGlyphs">[ X:1.4e-01, Y:6.2e-09 ]</text>
<rect x="121.5" y="426" width="444.5" height="9" fill="#f0f0f0"/>
<line x1="121.5" y1="426.5" x2="566" y2="426.5" stroke="#c8c8c8" stroke-width="1"/>
<line x1="122.0" y1="426" x2="122.0" y2="435" stroke="#c8c8c8" stroke-width="1"/>
<line x1="121.5" y1="434.5" x2="566" y2="434.5" stroke="#ffffff" stroke-width="1"/>
<line x1="565.5" y1="426" x2="565.5" y2="435" stroke="#ffffff" stroke-width="1"/>
<text x="123.5" y="433.2" font-size="8" fill="#000" textLength="204" lengthAdjust="spacingAndGlyphs">MinY:3.0e-14, MaxY:5.0e-01, Peak-Peak:5.0e-01, MidY:2.5e-01</text>
<rect x="1.6" y="229.8" width="553.8" height="210.0" fill="none" stroke="#c25fca" stroke-width="3.5"/>
<rect x="6.5" y="444" width="50.5" height="15" fill="#f0f0f0"/>
<line x1="6.5" y1="444.5" x2="57" y2="444.5" stroke="#ffffff" stroke-width="1"/>
<line x1="7.0" y1="444" x2="7.0" y2="459" stroke="#ffffff" stroke-width="1"/>
<line x1="6.5" y1="458.5" x2="57" y2="458.5" stroke="#696969" stroke-width="1"/>
<line x1="56.5" y1="444" x2="56.5" y2="459" stroke="#696969" stroke-width="1"/>
<line x1="7.5" y1="457.5" x2="56" y2="457.5" stroke="#a0a0a0" stroke-width="1"/>
<line x1="55.5" y1="445" x2="55.5" y2="458" stroke="#a0a0a0" stroke-width="1"/>
<text x="31.75" y="454.2" font-size="8" fill="#000" text-anchor="middle" textLength="18.0" lengthAdjust="spacingAndGlyphs">Open</text>
<rect x="61" y="444" width="50.5" height="15" fill="#f0f0f0"/>
<line x1="61" y1="444.5" x2="111.5" y2="444.5" stroke="#ffffff" stroke-width="1"/>
<line x1="61.5" y1="444" x2="61.5" y2="459" stroke="#ffffff" stroke-width="1"/>
<line x1="61" y1="458.5" x2="111.5" y2="458.5" stroke="#696969" stroke-width="1"/>
<line x1="111.0" y1="444" x2="111.0" y2="459" stroke="#696969" stroke-width="1"/>
<line x1="62" y1="457.5" x2="110.5" y2="457.5" stroke="#a0a0a0" stroke-width="1"/>
<line x1="110.0" y1="445" x2="110.0" y2="458" stroke="#a0a0a0" stroke-width="1"/>
<text x="86.25" y="454.2" font-size="8" fill="#000" text-anchor="middle" textLength="16.8" lengthAdjust="spacingAndGlyphs">Save</text>
<rect x="660" y="444.5" width="50" height="14.5" fill="#f0f0f0"/>
<line x1="660" y1="445.0" x2="710" y2="445.0" stroke="#ffffff" stroke-width="1"/>
<line x1="660.5" y1="444.5" x2="660.5" y2="459" stroke="#ffffff" stroke-width="1"/>
<line x1="660" y1="458.5" x2="710" y2="458.5" stroke="#696969" stroke-width="1"/>
<line x1="709.5" y1="444.5" x2="709.5" y2="459" stroke="#696969" stroke-width="1"/>
<line x1="661" y1="457.5" x2="709" y2="457.5" stroke="#a0a0a0" stroke-width="1"/>
<line x1="708.5" y1="445.5" x2="708.5" y2="458" stroke="#a0a0a0" stroke-width="1"/>
<text x="685.0" y="454.45" font-size="8" fill="#000" text-anchor="middle" textLength="18.8" lengthAdjust="spacingAndGlyphs">Close</text>
<path d="M712 462L713 461" stroke="#b0b0b0" stroke-width="1"/>
<path d="M709 462L713 458" stroke="#b0b0b0" stroke-width="1"/>
<path d="M706 462L713 455" stroke="#b0b0b0" stroke-width="1"/>
<text x="579" y="244" font-size="8" fill="#000" textLength="44.5" lengthAdjust="spacingAndGlyphs">Statistical Eye</text>
<rect x="628" y="235" width="32" height="11" fill="#f2f2f2"/>
<line x1="628" y1="235.5" x2="660" y2="235.5" stroke="#c8c8c8" stroke-width="1"/>
<line x1="628.5" y1="235" x2="628.5" y2="246" stroke="#c8c8c8" stroke-width="1"/>
<line x1="628" y1="245.5" x2="660" y2="245.5" stroke="#808080" stroke-width="1"/>
<line x1="659.5" y1="235" x2="659.5" y2="246" stroke="#808080" stroke-width="1"/>
<line x1="658.5" y1="236" x2="658.5" y2="245" stroke="#b0b0b0" stroke-width="1"/>
<text x="630.4" y="244" font-size="8" fill="#000" textLength="25.6" lengthAdjust="spacingAndGlyphs">Bathtub</text>
<text x="581" y="259.2" font-size="8" fill="#000" textLength="45.8" lengthAdjust="spacingAndGlyphs">Bathtub Type</text>
<rect x="645" y="251" width="64" height="12" fill="#fff"/>
<line x1="645" y1="251.5" x2="709" y2="251.5" stroke="#8e8e8e" stroke-width="1"/>
<line x1="645.5" y1="251" x2="645.5" y2="263" stroke="#8e8e8e" stroke-width="1"/>
<line x1="646" y1="252.5" x2="708" y2="252.5" stroke="#c8c8c8" stroke-width="1"/>
<line x1="646.5" y1="252" x2="646.5" y2="262" stroke="#c8c8c8" stroke-width="1"/>
<line x1="645" y1="262.5" x2="709" y2="262.5" stroke="#ffffff" stroke-width="1"/>
<line x1="708.5" y1="251" x2="708.5" y2="263" stroke="#ffffff" stroke-width="1"/>
<rect x="697.5" y="253" width="10" height="8.5" fill="#f0f0f0"/>
<line x1="697.5" y1="253.5" x2="707.5" y2="253.5" stroke="#fff" stroke-width="1"/>
<line x1="698.0" y1="253" x2="698.0" y2="261.5" stroke="#fff" stroke-width="1"/>
<line x1="697.5" y1="261" x2="707.5" y2="261" stroke="#8a8a8a" stroke-width="1"/>
<line x1="707.0" y1="253" x2="707.0" y2="261.5" stroke="#8a8a8a" stroke-width="1"/>
<path d="M699.8 255.8H705.4L702.6 259.1Z" fill="#000"/>
<text x="648" y="259.9" font-size="8" fill="#000" textLength="33.1" lengthAdjust="spacingAndGlyphs">Horizontal</text>
<path d="M583 270.5H579.5V344.5H708.5V270.5H603.6" fill="none" stroke="#dcdcdc"/>
<text x="585" y="272.7" font-size="8" fill="#000" textLength="16.6" lengthAdjust="spacingAndGlyphs">Label</text>
<text x="585.5" y="287.5" font-size="8" fill="#000" textLength="19.2" lengthAdjust="spacingAndGlyphs">Name</text>
<rect x="635.5" y="276.5" width="32.299999999999955" height="14.0" fill="#f0f0f0"/>
<line x1="635.5" y1="277.0" x2="667.8" y2="277.0" stroke="#8e8e8e" stroke-width="1"/>
<line x1="636.0" y1="276.5" x2="636.0" y2="290.5" stroke="#8e8e8e" stroke-width="1"/>
<line x1="636.5" y1="278.0" x2="666.8" y2="278.0" stroke="#c8c8c8" stroke-width="1"/>
<line x1="637.0" y1="277.5" x2="637.0" y2="289.5" stroke="#c8c8c8" stroke-width="1"/>
<line x1="635.5" y1="290.0" x2="667.8" y2="290.0" stroke="#ffffff" stroke-width="1"/>
<line x1="667.3" y1="276.5" x2="667.3" y2="290.5" stroke="#ffffff" stroke-width="1"/>
<text x="639.3" y="285.8" font-size="8" fill="#000" textLength="25.8" lengthAdjust="spacingAndGlyphs">Time(s)</text>
<rect x="672" y="276.5" width="32.5" height="14.0" fill="#f0f0f0"/>
<line x1="672" y1="277.0" x2="704.5" y2="277.0" stroke="#8e8e8e" stroke-width="1"/>
<line x1="672.5" y1="276.5" x2="672.5" y2="290.5" stroke="#8e8e8e" stroke-width="1"/>
<line x1="673" y1="278.0" x2="703.5" y2="278.0" stroke="#c8c8c8" stroke-width="1"/>
<line x1="673.5" y1="277.5" x2="673.5" y2="289.5" stroke="#c8c8c8" stroke-width="1"/>
<line x1="672" y1="290.0" x2="704.5" y2="290.0" stroke="#ffffff" stroke-width="1"/>
<line x1="704.0" y1="276.5" x2="704.0" y2="290.5" stroke="#ffffff" stroke-width="1"/>
<text x="675" y="285.8" font-size="8" fill="#000" textLength="13.2" lengthAdjust="spacingAndGlyphs">BER</text>
<text x="585.5" y="304.2" font-size="8" fill="#000" textLength="25.5" lengthAdjust="spacingAndGlyphs">Decimal</text>
<rect x="635.5" y="295.5" width="32.89999999999998" height="12.199999999999989" fill="#fff"/>
<line x1="635.5" y1="296.0" x2="668.4" y2="296.0" stroke="#8e8e8e" stroke-width="1"/>
<line x1="636.0" y1="295.5" x2="636.0" y2="307.7" stroke="#8e8e8e" stroke-width="1"/>
<line x1="636.5" y1="297.0" x2="667.4" y2="297.0" stroke="#c8c8c8" stroke-width="1"/>
<line x1="637.0" y1="296.5" x2="637.0" y2="306.7" stroke="#c8c8c8" stroke-width="1"/>
<line x1="635.5" y1="307.2" x2="668.4" y2="307.2" stroke="#ffffff" stroke-width="1"/>
<line x1="667.9" y1="295.5" x2="667.9" y2="307.7" stroke="#ffffff" stroke-width="1"/>
<rect x="656.9" y="297.5" width="10" height="8.699999999999989" fill="#f0f0f0"/>
<line x1="656.9" y1="298.0" x2="666.9" y2="298.0" stroke="#fff" stroke-width="1"/>
<line x1="657.4" y1="297.5" x2="657.4" y2="306.2" stroke="#fff" stroke-width="1"/>
<line x1="656.9" y1="305.7" x2="666.9" y2="305.7" stroke="#8a8a8a" stroke-width="1"/>
<line x1="666.4" y1="297.5" x2="666.4" y2="306.2" stroke="#8a8a8a" stroke-width="1"/>
<path d="M659.1999999999999 300.40000000000003H664.8L662.0 303.70000000000005Z" fill="#000"/>
<text x="638.5" y="304.5" font-size="8" fill="#000" textLength="16.4" lengthAdjust="spacingAndGlyphs">nano</text>
<rect x="671.7" y="295.5" width="32.799999999999955" height="12.199999999999989" fill="#f0f0f0"/>
<line x1="671.7" y1="296.0" x2="704.5" y2="296.0" stroke="#8e8e8e" stroke-width="1"/>
<line x1="672.2" y1="295.5" x2="672.2" y2="307.7" stroke="#8e8e8e" stroke-width="1"/>
<line x1="672.7" y1="297.0" x2="703.5" y2="297.0" stroke="#c8c8c8" stroke-width="1"/>
<line x1="673.2" y1="296.5" x2="673.2" y2="306.7" stroke="#c8c8c8" stroke-width="1"/>
<line x1="671.7" y1="307.2" x2="704.5" y2="307.2" stroke="#ffffff" stroke-width="1"/>
<line x1="704.0" y1="295.5" x2="704.0" y2="307.7" stroke="#ffffff" stroke-width="1"/>
<rect x="693.0" y="297.5" width="10" height="8.699999999999989" fill="#f0f0f0"/>
<line x1="693.0" y1="298.0" x2="703.0" y2="298.0" stroke="#fff" stroke-width="1"/>
<line x1="693.5" y1="297.5" x2="693.5" y2="306.2" stroke="#fff" stroke-width="1"/>
<line x1="693.0" y1="305.7" x2="703.0" y2="305.7" stroke="#8a8a8a" stroke-width="1"/>
<line x1="702.5" y1="297.5" x2="702.5" y2="306.2" stroke="#8a8a8a" stroke-width="1"/>
<path d="M695.3 300.40000000000003H700.9L698.1 303.70000000000005Z" fill="#a0a0a0"/>
<text x="674.7" y="304.5" font-size="8" fill="#a0a0a0" textLength="4.1" lengthAdjust="spacingAndGlyphs">0</text>
<text x="585.5" y="320.9" font-size="8" fill="#000" textLength="25.5" lengthAdjust="spacingAndGlyphs">Interval</text>
<rect x="635.5" y="311.2" width="32.89999999999998" height="13.5" fill="#fff"/>
<line x1="635.5" y1="311.7" x2="668.4" y2="311.7" stroke="#8e8e8e" stroke-width="1"/>
<line x1="636.0" y1="311.2" x2="636.0" y2="324.7" stroke="#8e8e8e" stroke-width="1"/>
<line x1="636.5" y1="312.7" x2="667.4" y2="312.7" stroke="#c8c8c8" stroke-width="1"/>
<line x1="637.0" y1="312.2" x2="637.0" y2="323.7" stroke="#c8c8c8" stroke-width="1"/>
<line x1="635.5" y1="324.2" x2="668.4" y2="324.2" stroke="#ffffff" stroke-width="1"/>
<line x1="667.9" y1="311.2" x2="667.9" y2="324.7" stroke="#ffffff" stroke-width="1"/>
<text x="638.3" y="320.1" font-size="8" fill="#000" textLength="15.8" lengthAdjust="spacingAndGlyphs">0.05</text>
<rect x="671.7" y="311.2" width="32.799999999999955" height="13.5" fill="#fff"/>
<line x1="671.7" y1="311.7" x2="704.5" y2="311.7" stroke="#8e8e8e" stroke-width="1"/>
<line x1="672.2" y1="311.2" x2="672.2" y2="324.7" stroke="#8e8e8e" stroke-width="1"/>
<line x1="672.7" y1="312.7" x2="703.5" y2="312.7" stroke="#c8c8c8" stroke-width="1"/>
<line x1="673.2" y1="312.2" x2="673.2" y2="323.7" stroke="#c8c8c8" stroke-width="1"/>
<line x1="671.7" y1="324.2" x2="704.5" y2="324.2" stroke="#ffffff" stroke-width="1"/>
<line x1="704.0" y1="311.2" x2="704.0" y2="324.7" stroke="#ffffff" stroke-width="1"/>
<text x="674.5" y="320.1" font-size="8" fill="#000" textLength="14.8" lengthAdjust="spacingAndGlyphs">0.01</text>
<rect x="582" y="329" width="124" height="13.600000000000023" fill="#f0f0f0"/>
<line x1="582" y1="329.5" x2="706" y2="329.5" stroke="#ffffff" stroke-width="1"/>
<line x1="582.5" y1="329" x2="582.5" y2="342.6" stroke="#ffffff" stroke-width="1"/>
<line x1="582" y1="342.1" x2="706" y2="342.1" stroke="#696969" stroke-width="1"/>
<line x1="705.5" y1="329" x2="705.5" y2="342.6" stroke="#696969" stroke-width="1"/>
<line x1="583" y1="341.1" x2="705" y2="341.1" stroke="#a0a0a0" stroke-width="1"/>
<line x1="704.5" y1="330" x2="704.5" y2="341.6" stroke="#a0a0a0" stroke-width="1"/>
<text x="644.0" y="338.5" font-size="8" fill="#000" text-anchor="middle" textLength="18.4" lengthAdjust="spacingAndGlyphs">Apply</text>
<rect x="582" y="349" width="124" height="13.5" fill="#f0f0f0"/>
<line x1="582" y1="349.5" x2="706" y2="349.5" stroke="#ffffff" stroke-width="1"/>
<line x1="582.5" y1="349" x2="582.5" y2="362.5" stroke="#ffffff" stroke-width="1"/>
<line x1="582" y1="362.0" x2="706" y2="362.0" stroke="#696969" stroke-width="1"/>
<line x1="705.5" y1="349" x2="705.5" y2="362.5" stroke="#696969" stroke-width="1"/>
<line x1="583" y1="361.0" x2="705" y2="361.0" stroke="#a0a0a0" stroke-width="1"/>
<line x1="704.5" y1="350" x2="704.5" y2="361.5" stroke="#a0a0a0" stroke-width="1"/>
<text x="629.8" y="359.1" font-size="8" fill="#000" textLength="28.2" lengthAdjust="spacingAndGlyphs">Measure</text>
<circle cx="568.3" cy="237.6" r="7" fill="none" stroke="#ee1111" stroke-width="1.3"/>
<text x="568.3" y="241.9" font-size="12.5" fill="#ee1111" text-anchor="middle" textLength="6.4" lengthAdjust="spacingAndGlyphs" stroke="#ee1111" stroke-width="0.3">1</text>
<circle cx="572.1" cy="254" r="7" fill="none" stroke="#ee1111" stroke-width="1.3"/>
<text x="572.1" y="258.3" font-size="12.5" fill="#ee1111" text-anchor="middle" textLength="6.4" lengthAdjust="spacingAndGlyphs" stroke="#ee1111" stroke-width="0.3">2</text>
<circle cx="573.6" cy="271.5" r="7" fill="none" stroke="#ee1111" stroke-width="1.3"/>
<text x="573.6" y="275.8" font-size="12.5" fill="#ee1111" text-anchor="middle" textLength="6.4" lengthAdjust="spacingAndGlyphs" stroke="#ee1111" stroke-width="0.3">3</text>
<circle cx="618.2" cy="356.6" r="7" fill="none" stroke="#ee1111" stroke-width="1.3"/>
<text x="618.2" y="360.90000000000003" font-size="12.5" fill="#ee1111" text-anchor="middle" textLength="6.4" lengthAdjust="spacingAndGlyphs" stroke="#ee1111" stroke-width="0.3">4</text>
</svg>
</body></html>
